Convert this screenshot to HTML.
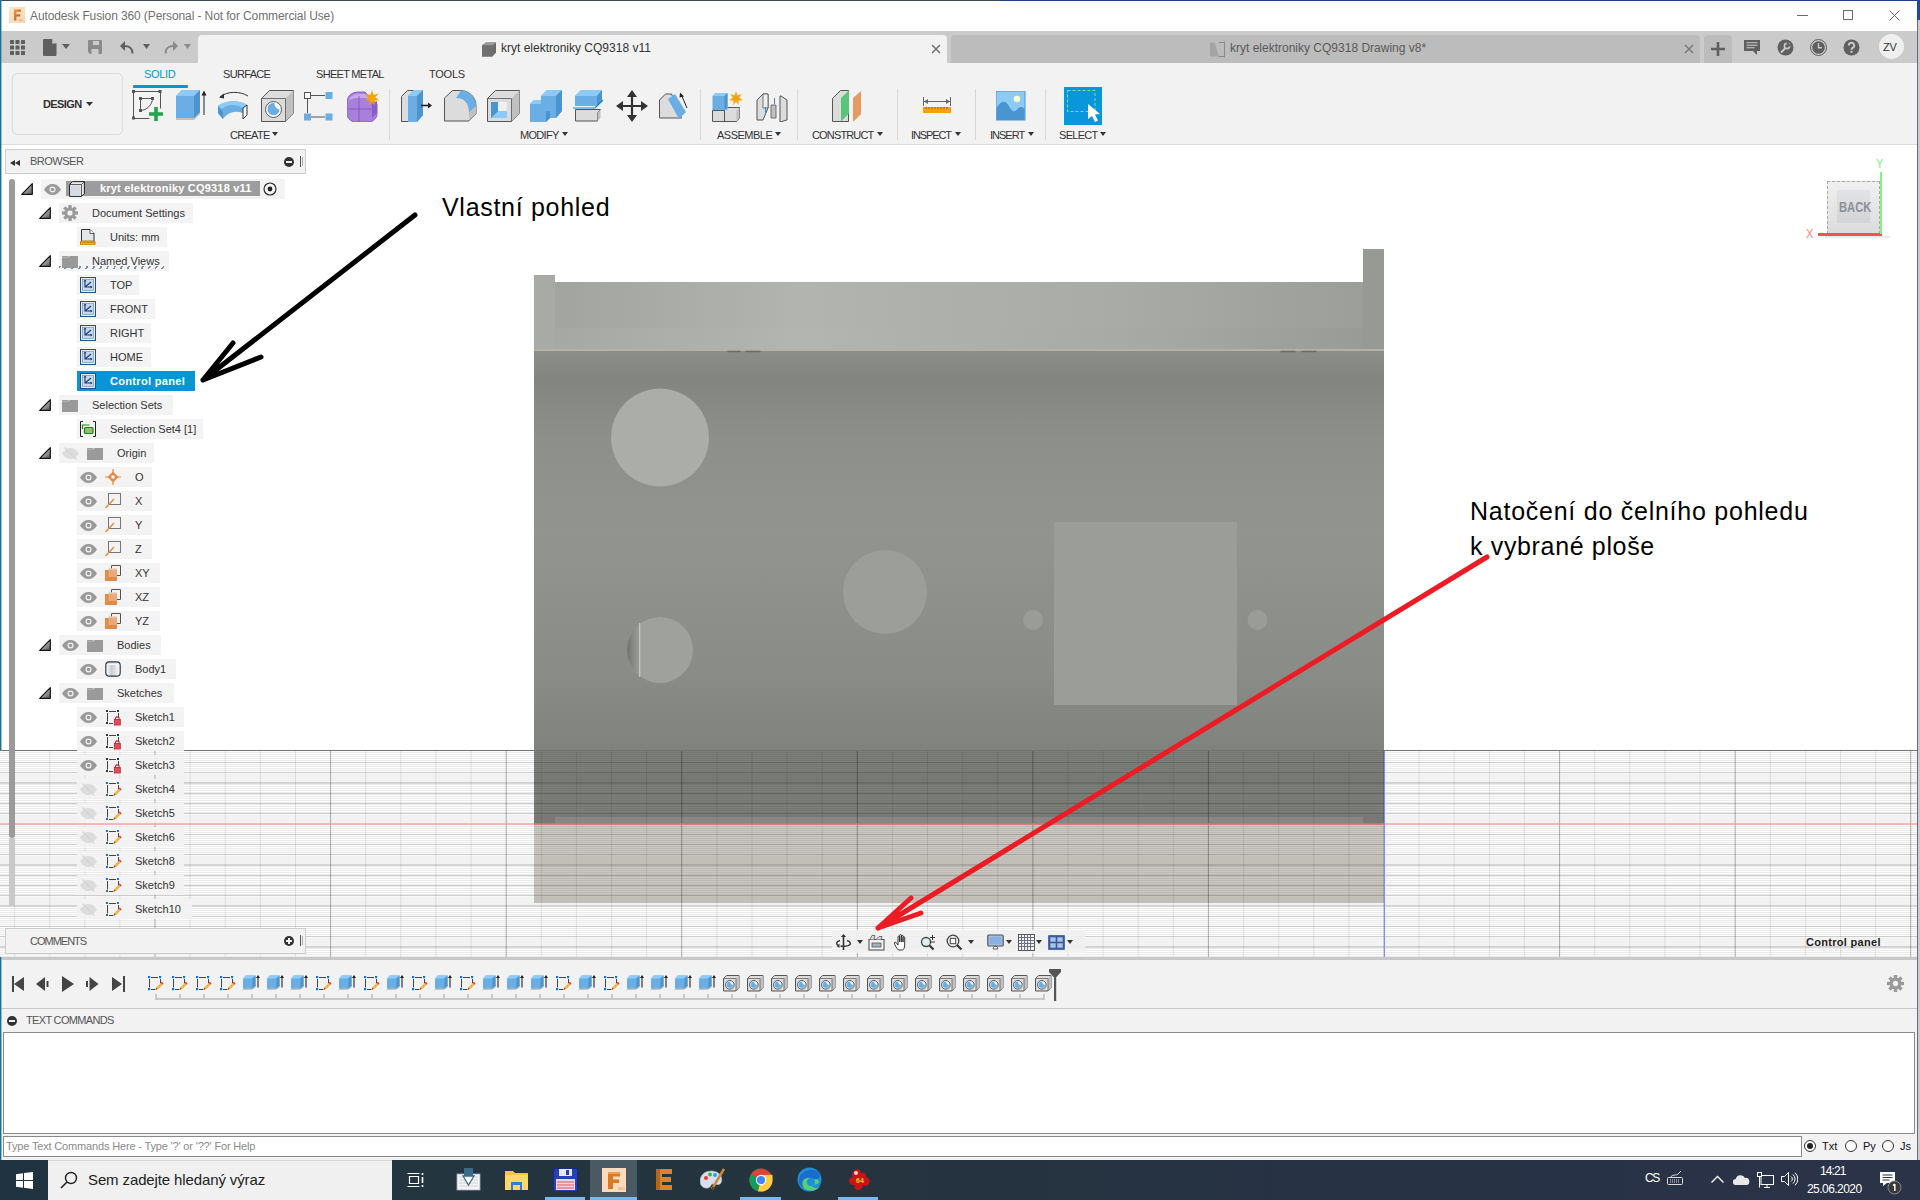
<!DOCTYPE html>
<html><head><meta charset="utf-8">
<style>
*{margin:0;padding:0;box-sizing:border-box}
html,body{width:1920px;height:1200px;overflow:hidden;background:#fff;font-family:"Liberation Sans",sans-serif}
.a{position:absolute}
.t{position:absolute;white-space:nowrap;line-height:1}
</style></head><body>
<!-- title bar -->
<div class="a" style="left:0;top:0;width:1920px;height:31px;background:#fff"></div>
<div class="a" style="left:0;top:0;width:1920px;height:1px;background:#3c4a55"></div>
<!-- tab strip -->
<div class="a" style="left:0;top:31px;width:1920px;height:32px;background:#cbcbcb"></div>
<!-- toolbar -->
<div class="a" style="left:0;top:63px;width:1920px;height:82px;background:#f2f2f2;border-bottom:1px solid #dcdcdc"></div>
<!-- viewport -->
<div class="a" id="vp" style="left:0;top:145px;width:1920px;height:812px;background:#fff"></div>
<!-- timeline -->
<div class="a" style="left:0;top:957px;width:1920px;height:3px;background:#c8c8c8"></div>
<div class="a" style="left:0;top:960px;width:1920px;height:48px;background:#f2f2f2"></div>
<!-- text commands -->
<div class="a" style="left:0;top:1008px;width:1920px;height:152px;background:#f2f2f2;border-top:1px solid #c8c8c8"></div>
<!-- taskbar -->
<div class="a" style="left:0;top:1160px;width:1920px;height:40px;background:linear-gradient(90deg,#22363f,#25343f 45%,#283246 80%,#2b3348)"></div>
<!-- window borders -->
<div class="a" style="left:0;top:0;width:1px;height:1160px;background:#1f6e99"></div><div class="a" style="left:1px;top:0;width:1px;height:1160px;background:#5b93b5;opacity:.6"></div>


<!-- VIEWPORT -->
<svg class="a" style="left:0;top:0" width="1920" height="960" viewBox="0 0 1920 960">
<defs>
<linearGradient id="body" x1="0" y1="0" x2="0" y2="1">
<stop offset="0" stop-color="#8b8d88"/><stop offset=".07" stop-color="#838580"/><stop offset=".22" stop-color="#8d8f8a"/><stop offset=".45" stop-color="#92948f"/><stop offset=".8" stop-color="#8a8c87"/><stop offset="1" stop-color="#80827d"/>
</linearGradient>
<linearGradient id="rim" x1="0" y1="0" x2="1" y2="0">
<stop offset="0" stop-color="#a6a8a3"/><stop offset=".3" stop-color="#b3b5b0"/><stop offset=".7" stop-color="#a8aaa5"/><stop offset="1" stop-color="#999b96"/>
</linearGradient>
<linearGradient id="recess" x1="0" y1="0" x2="1" y2="0">
<stop offset="0" stop-color="#a2a4a0"/><stop offset=".3" stop-color="#b2b4af"/><stop offset=".7" stop-color="#a9aba6"/><stop offset="1" stop-color="#9c9e99"/>
</linearGradient>
</defs>
<rect x="0" y="750" width="1917" height="207" fill="#fdfdfd"/>
<!-- model -->
<rect x="534" y="275" width="21" height="76" fill="#a8aaa5"/>
<rect x="1363" y="249" width="21" height="102" fill="#979994"/>
<rect x="555" y="282" width="808" height="69" fill="url(#rim)"/>
<rect x="555" y="282" width="808" height="46" fill="url(#recess)"/>
<rect x="534" y="349" width="850" height="2" fill="#b4b1a6"/>
<rect x="534" y="351" width="850" height="399" fill="url(#body)"/>
<path d="M660 388.5a49 49 0 1 0 .01 0z" fill="#abada8"/>
<circle cx="885" cy="592" r="42" fill="#9c9e99"/>
<circle cx="660" cy="650" r="33" fill="#9fa19c"/>
<linearGradient id="cres" x1="0" y1="0" x2="1" y2="0"><stop offset="0" stop-color="#6f716c"/><stop offset=".6" stop-color="#8e908b"/><stop offset="1" stop-color="#9a9c97"/></linearGradient>
<path d="M640 623.8A33 33 0 0 0 640 676.2Z" fill="url(#cres)"/><rect x="639" y="623" width="1.3" height="54" fill="#c8c6bc"/>
<path d="M728 351.5h12M746 351.5h14M1281 351.5h14M1302 351.5h14" stroke="#6a6b66" stroke-width="1.3" stroke-linecap="round"/>
<circle cx="1033" cy="620" r="10" fill="#9a9c97"/>
<circle cx="1257.5" cy="620" r="10" fill="#9a9c97"/>
<rect x="1054" y="522" width="183" height="183" fill="#9b9d98"/>
<rect x="534" y="751" width="850" height="73" fill="#7d7f7a"/>
<rect x="555" y="817" width="808" height="7" fill="#8d8f8a"/>
<rect x="534" y="824" width="850" height="79" fill="#cbc8c1"/>
<!-- grid lines -->
<path d="M0 752.5h1917M0 754.5h1917M0 756.5h1917M0 758.5h1917M0 760.5h1917M0 764.5h1917M0 766.5h1917M0 768.5h1917M0 770.5h1917M0 784.5h1917M0 786.5h1917M0 788.5h1917M0 790.5h1917M0 792.5h1917M0 794.5h1917M0 796.5h1917M0 798.5h1917M0 800.5h1917M0 802.5h1917M0 804.5h1917M0 806.5h1917M0 808.5h1917M0 810.5h1917M0 812.5h1917M0 824.5h1917M0 826.5h1917M0 828.5h1917M0 830.5h1917M0 832.5h1917M0 836.5h1917M0 838.5h1917M0 840.5h1917M0 842.5h1917M0 846.5h1917M0 848.5h1917M0 850.5h1917M0 852.5h1917M0 866.5h1917M0 868.5h1917M0 870.5h1917M0 872.5h1917M0 874.5h1917M0 876.5h1917M0 878.5h1917M0 880.5h1917M0 882.5h1917M0 884.5h1917M0 886.5h1917M0 888.5h1917M0 890.5h1917M0 892.5h1917M0 894.5h1917M0 908.5h1917M0 910.5h1917M0 912.5h1917M0 914.5h1917M0 918.5h1917M0 920.5h1917M0 922.5h1917M0 924.5h1917M0 928.5h1917M0 930.5h1917M0 932.5h1917M0 934.5h1917M0 948.5h1917M0 950.5h1917M0 952.5h1917M0 954.5h1917M0 956.5h1917" stroke="#000" stroke-opacity=".07" stroke-width="1"/>
<path d="M0 762.5h1917M0 772.5h1917M0 793.5h1917M0 803.5h1917M0 813.5h1917M0 834.5h1917M0 844.5h1917M0 854.5h1917M0 875.5h1917M0 885.5h1917M0 895.5h1917M0 916.5h1917M0 926.5h1917M0 936.5h1917" stroke="#000" stroke-opacity=".19" stroke-width="1"/>
<path d="M0 778.0h1917M0 819.0h1917M0 860.0h1917M0 901.0h1917M0 942.0h1917" stroke="#000" stroke-opacity=".045" stroke-width="9"/>
<path d="M0 783h1917M0 865h1917M0 906h1917M0 947h1917" stroke="#000" stroke-opacity=".15" stroke-width="2"/>
<path d="M14.6 751v206M49.7 751v206M84.8 751v206M119.9 751v206M190.1 751v206M225.3 751v206M260.4 751v206M295.5 751v206M365.7 751v206M400.8 751v206M435.9 751v206M471.1 751v206M541.3 751v206M576.4 751v206M611.5 751v206M646.6 751v206M716.9 751v206M752.0 751v206M787.1 751v206M822.2 751v206M892.4 751v206M927.5 751v206M962.7 751v206M997.8 751v206M1068.0 751v206M1103.1 751v206M1138.2 751v206M1173.3 751v206M1243.6 751v206M1278.7 751v206M1313.8 751v206M1348.9 751v206M1419.1 751v206M1454.2 751v206M1489.4 751v206M1524.5 751v206M1594.7 751v206M1629.8 751v206M1664.9 751v206M1700.0 751v206M1770.3 751v206M1805.4 751v206M1840.5 751v206M1875.6 751v206" stroke="#000" stroke-opacity=".09" stroke-width="1"/>
<path d="M155.0 751v206M330.6 751v206M506.2 751v206M681.7 751v206M857.3 751v206M1032.9 751v206M1208.4 751v206M1384.0 751v206M1559.6 751v206M1735.2 751v206M1910.7 751v206" stroke="#000" stroke-opacity=".3" stroke-width="1"/>
<path d="M0 750.5h1917" stroke="#000" stroke-opacity=".55" stroke-width="1"/>
<path d="M0 824h1917" stroke="#ff8c8c" stroke-opacity=".8" stroke-width="1.6"/>
<path d="M534 824h850" stroke="#d05a5a" stroke-width="1.2"/>
<path d="M1384.5 751v206" stroke="#8a8af5" stroke-width="1"/>
</svg>

<!-- BROWSER -->
<div class="a" style="left:5px;top:149px;width:301px;height:25px;background:#f2f2f2;border:1px solid #cdcdcd"></div>
<svg class="a" style="left:10px;top:160px" width="10" height="6" viewBox="0 0 10 6"><path d="M0 3l5-3v6zM5 3l5-3v6z" fill="#333"/></svg>
<div class="t" id="browser" style="left:30px;top:156px;font-size:11px;color:#555;letter-spacing:-0.5px">BROWSER</div>
<div class="a" style="left:284px;top:157px;width:10px;height:10px;border-radius:50%;background:#333"></div><div class="a" style="left:286px;top:161px;width:6px;height:2px;background:#f2f2f2"></div>
<div class="a" style="left:300px;top:156px;width:1px;height:11px;background:#555"></div><div class="a" style="left:302px;top:157px;width:1px;height:9px;background:#aaa"></div>
<div class="a" style="left:9px;top:179px;width:6px;height:659px;background:#9b9b9b;border-radius:3px 3px 3px 3px"></div>
<div class="a" style="left:9px;top:838px;width:6px;height:68px;background:#c9c9c9"></div>
<div class="a" style="left:41px;top:179px;width:244px;height:20px;background:rgba(242,242,242,.95)"></div>
<svg class="a" style="left:21px;top:183px" width="12" height="12" viewBox="0 0 12 12"><defs><linearGradient id="tgr" x1="0" y1="0" x2="1" y2="1"><stop offset="0" stop-color="#eee"/><stop offset="1" stop-color="#555"/></linearGradient></defs><path d="M.7 11.3L11.3.7v10.6z" fill="url(#tgr)" stroke="#111" stroke-width="1.2" stroke-linejoin="round"/></svg>
<svg class="a" style="left:44px;top:184px" width="17" height="11" viewBox="0 0 17 11"><path d="M0 5.5C3 1 6 0 8.5 0S14 1 17 5.5C14 10 11 11 8.5 11S3 10 0 5.5z" fill="#9a9a9a"/><circle cx="8.5" cy="5.5" r="3" fill="#f2f2f2"/><circle cx="8.5" cy="5.5" r="1.8" fill="#9a9a9a"/></svg>
<div class="a" style="left:66px;top:181px;width:194px;height:15px;background:#9c9c9c"></div>
<svg class="a" style="left:69px;top:181px" width="16" height="16" viewBox="0 0 16 16"><path d="M.6 3.5L3.5.6h11.9v11.9l-2.9 2.9H.6z" fill="#e6e8ee" stroke="#222" stroke-width="1"/><path d="M.6 3.5h11.9v11.9M12.5 3.5l2.9-2.9" fill="none" stroke="#222" stroke-width=".7"/><rect x="1.5" y="4.5" width="10" height="10" fill="#d6dae2"/></svg>
<div class="t" id="rootlbl" style="left:100px;top:183px;font-size:11px;font-weight:bold;color:#fff;letter-spacing:0.2px">kryt elektroniky CQ9318 v11</div>
<svg class="a" style="left:263px;top:182px" width="14" height="14" viewBox="0 0 14 14"><circle cx="7" cy="7" r="6" fill="none" stroke="#222" stroke-width="1.1"/><circle cx="7" cy="7" r="2.4" fill="#222"/></svg>
<div class="a" style="left:59px;top:203px;width:134px;height:20px;background:rgba(242,242,242,.95)"></div>
<svg class="a" style="left:39px;top:207px" width="12" height="12" viewBox="0 0 12 12"><defs><linearGradient id="tg1" x1="0" y1="0" x2="1" y2="1"><stop offset="0" stop-color="#eee"/><stop offset="1" stop-color="#555"/></linearGradient></defs><path d="M.7 11.3L11.3.7v10.6z" fill="url(#tg1)" stroke="#111" stroke-width="1.2" stroke-linejoin="round"/></svg>
<svg class="a" style="left:62px;top:205px" width="16" height="16" viewBox="0 0 16 16"><g fill="#9a9a9a"><circle cx="8" cy="8" r="5.6"/><rect x="6.3" y="0" width="3.4" height="16"/><rect x="0" y="6.3" width="16" height="3.4"/><rect x="6.3" y="0" width="3.4" height="16" transform="rotate(45 8 8)"/><rect x="6.3" y="0" width="3.4" height="16" transform="rotate(-45 8 8)"/></g><circle cx="8" cy="8" r="2.6" fill="#f2f2f2"/></svg>
<div class="t" id="row1" style="left:92px;top:208px;font-size:11px;font-weight:normal;color:#333">Document Settings</div>
<div class="a" style="left:77px;top:227px;width:90px;height:20px;background:rgba(242,242,242,.95)"></div>
<svg class="a" style="left:80px;top:229px" width="16" height="16" viewBox="0 0 16 16"><path d="M1.5 .5h8.5l4 4v10.5h-12.5z" fill="#e4e6ea" stroke="#333" stroke-width="1"/><path d="M10 .5v4h4" fill="#fff" stroke="#333" stroke-width=".8"/><rect x=".5" y="12" width="14.5" height="4" rx="1" fill="#f5b400" stroke="#c07a00" stroke-width="1"/><path d="M3 13v1M5 13v1M7 13v1M9 13v1M11 13v1M13 13v1" stroke="#8a5a00" stroke-width=".8"/></svg>
<div class="t" id="row2" style="left:110px;top:232px;font-size:11px;font-weight:normal;color:#333">Units: mm</div>
<div class="a" style="left:59px;top:251px;width:110px;height:20px;background:rgba(242,242,242,.95)"></div>
<svg class="a" style="left:39px;top:255px" width="12" height="12" viewBox="0 0 12 12"><defs><linearGradient id="tg3" x1="0" y1="0" x2="1" y2="1"><stop offset="0" stop-color="#eee"/><stop offset="1" stop-color="#555"/></linearGradient></defs><path d="M.7 11.3L11.3.7v10.6z" fill="url(#tg3)" stroke="#111" stroke-width="1.2" stroke-linejoin="round"/></svg>
<svg class="a" style="left:62px;top:255px" width="16" height="13" viewBox="0 0 16 13"><path d="M0 1h6l1 1h-7z" fill="#a0a0a0"/><path d="M0 2.3h6.5l1.3-1.3H16v12H0z" fill="#9a9a9a"/></svg>
<div class="a" style="left:59px;top:266px;width:106px;height:3px;background:repeating-linear-gradient(120deg,#7a8aa8 0 1.6px,transparent 1.6px 6px)"></div>
<div class="t" id="row3" style="left:92px;top:256px;font-size:11px;font-weight:normal;color:#333">Named Views</div>
<div class="a" style="left:77px;top:275px;width:62px;height:20px;background:rgba(242,242,242,.95)"></div>
<svg class="a" style="left:80px;top:277px" width="16" height="16" viewBox="0 0 16 16"><rect x=".5" y=".5" width="15" height="15" fill="#fff" stroke="#1f4e8c" stroke-width="1.2"/><rect x="2.5" y="2.5" width="11" height="11" fill="#c5d8ec" stroke="#6f8fb8" stroke-width=".7"/><path d="M5 3.5v6.5h6.5M5 10l6-5" stroke="#1a3d70" stroke-width="1.1" fill="none"/><path d="M5 2.5l-1.5 2h3zM12.5 10l-2-1.5v3z" fill="#1a3d70"/></svg>
<div class="t" id="row4" style="left:110px;top:280px;font-size:11px;font-weight:normal;color:#333">TOP</div>
<div class="a" style="left:77px;top:299px;width:78px;height:20px;background:rgba(242,242,242,.95)"></div>
<svg class="a" style="left:80px;top:301px" width="16" height="16" viewBox="0 0 16 16"><rect x=".5" y=".5" width="15" height="15" fill="#fff" stroke="#1f4e8c" stroke-width="1.2"/><rect x="2.5" y="2.5" width="11" height="11" fill="#c5d8ec" stroke="#6f8fb8" stroke-width=".7"/><path d="M5 3.5v6.5h6.5M5 10l6-5" stroke="#1a3d70" stroke-width="1.1" fill="none"/><path d="M5 2.5l-1.5 2h3zM12.5 10l-2-1.5v3z" fill="#1a3d70"/></svg>
<div class="t" id="row5" style="left:110px;top:304px;font-size:11px;font-weight:normal;color:#333">FRONT</div>
<div class="a" style="left:77px;top:323px;width:74px;height:20px;background:rgba(242,242,242,.95)"></div>
<svg class="a" style="left:80px;top:325px" width="16" height="16" viewBox="0 0 16 16"><rect x=".5" y=".5" width="15" height="15" fill="#fff" stroke="#1f4e8c" stroke-width="1.2"/><rect x="2.5" y="2.5" width="11" height="11" fill="#c5d8ec" stroke="#6f8fb8" stroke-width=".7"/><path d="M5 3.5v6.5h6.5M5 10l6-5" stroke="#1a3d70" stroke-width="1.1" fill="none"/><path d="M5 2.5l-1.5 2h3zM12.5 10l-2-1.5v3z" fill="#1a3d70"/></svg>
<div class="t" id="row6" style="left:110px;top:328px;font-size:11px;font-weight:normal;color:#333">RIGHT</div>
<div class="a" style="left:77px;top:347px;width:74px;height:20px;background:rgba(242,242,242,.95)"></div>
<svg class="a" style="left:80px;top:349px" width="16" height="16" viewBox="0 0 16 16"><rect x=".5" y=".5" width="15" height="15" fill="#fff" stroke="#1f4e8c" stroke-width="1.2"/><rect x="2.5" y="2.5" width="11" height="11" fill="#c5d8ec" stroke="#6f8fb8" stroke-width=".7"/><path d="M5 3.5v6.5h6.5M5 10l6-5" stroke="#1a3d70" stroke-width="1.1" fill="none"/><path d="M5 2.5l-1.5 2h3zM12.5 10l-2-1.5v3z" fill="#1a3d70"/></svg>
<div class="t" id="row7" style="left:110px;top:352px;font-size:11px;font-weight:normal;color:#333">HOME</div>
<div class="a" style="left:77px;top:371px;width:118px;height:20px;background:#0696d7"></div>
<svg class="a" style="left:80px;top:373px" width="16" height="16" viewBox="0 0 16 16"><rect x=".5" y=".5" width="15" height="15" fill="#fff" stroke="#1f4e8c" stroke-width="1.2"/><rect x="2.5" y="2.5" width="11" height="11" fill="#c5d8ec" stroke="#6f8fb8" stroke-width=".7"/><path d="M5 3.5v6.5h6.5M5 10l6-5" stroke="#1a3d70" stroke-width="1.1" fill="none"/><path d="M5 2.5l-1.5 2h3zM12.5 10l-2-1.5v3z" fill="#1a3d70"/></svg>
<div class="t" id="row8" style="left:110px;top:376px;font-size:11px;font-weight:bold;color:#fff;letter-spacing:0.33px">Control panel</div>
<div class="a" style="left:59px;top:395px;width:114px;height:20px;background:rgba(242,242,242,.95)"></div>
<svg class="a" style="left:39px;top:399px" width="12" height="12" viewBox="0 0 12 12"><defs><linearGradient id="tg9" x1="0" y1="0" x2="1" y2="1"><stop offset="0" stop-color="#eee"/><stop offset="1" stop-color="#555"/></linearGradient></defs><path d="M.7 11.3L11.3.7v10.6z" fill="url(#tg9)" stroke="#111" stroke-width="1.2" stroke-linejoin="round"/></svg>
<svg class="a" style="left:62px;top:399px" width="16" height="13" viewBox="0 0 16 13"><path d="M0 1h6l1 1h-7z" fill="#a0a0a0"/><path d="M0 2.3h6.5l1.3-1.3H16v12H0z" fill="#9a9a9a"/></svg>
<div class="t" id="row9" style="left:92px;top:400px;font-size:11px;font-weight:normal;color:#333">Selection Sets</div>
<div class="a" style="left:77px;top:419px;width:126px;height:20px;background:rgba(242,242,242,.95)"></div>
<svg class="a" style="left:80px;top:421px" width="16" height="16" viewBox="0 0 16 16"><path d="M3 .5H.5v15H3M13 .5h2.5v15H13" fill="none" stroke="#222" stroke-width="1"/><path d="M2.5 8V4h7" fill="none" stroke="#1f8a1f" stroke-width="1.2"/><rect x="4.5" y="6.5" width="8.5" height="6" rx="1" fill="#8cc36c" stroke="#1f7a1f" stroke-width="1.2"/></svg>
<div class="t" id="row10" style="left:110px;top:424px;font-size:11px;font-weight:normal;color:#333">Selection Set4 [1]</div>
<div class="a" style="left:59px;top:443px;width:95px;height:20px;background:rgba(242,242,242,.95)"></div>
<svg class="a" style="left:39px;top:447px" width="12" height="12" viewBox="0 0 12 12"><defs><linearGradient id="tg11" x1="0" y1="0" x2="1" y2="1"><stop offset="0" stop-color="#eee"/><stop offset="1" stop-color="#555"/></linearGradient></defs><path d="M.7 11.3L11.3.7v10.6z" fill="url(#tg11)" stroke="#111" stroke-width="1.2" stroke-linejoin="round"/></svg>
<svg class="a" style="left:62px;top:447px" width="17" height="13" viewBox="0 0 17 13"><path d="M0 6.5C3 2 6 1 8.5 1S14 2 17 6.5C14 11 11 12 8.5 12S3 11 0 6.5z" fill="#dcdcdc"/><path d="M2.5 .5l12 12" stroke="#d4d4d4" stroke-width="1.3"/></svg>
<svg class="a" style="left:87px;top:447px" width="16" height="13" viewBox="0 0 16 13"><path d="M0 1h6l1 1h-7z" fill="#a0a0a0"/><path d="M0 2.3h6.5l1.3-1.3H16v12H0z" fill="#9a9a9a"/></svg>
<div class="t" id="row11" style="left:117px;top:448px;font-size:11px;font-weight:normal;color:#333">Origin</div>
<div class="a" style="left:77px;top:467px;width:75px;height:20px;background:rgba(242,242,242,.95)"></div>
<svg class="a" style="left:80px;top:472px" width="17" height="11" viewBox="0 0 17 11"><path d="M0 5.5C3 1 6 0 8.5 0S14 1 17 5.5C14 10 11 11 8.5 11S3 10 0 5.5z" fill="#9a9a9a"/><circle cx="8.5" cy="5.5" r="3" fill="#f2f2f2"/><circle cx="8.5" cy="5.5" r="1.8" fill="#9a9a9a"/></svg>
<svg class="a" style="left:105px;top:469px" width="16" height="16" viewBox="0 0 16 16"><path d="M8 0v16M0 8h16" stroke="#e38a45" stroke-width="1.2"/><path d="M8 2.5L13.5 8 8 13.5 2.5 8z" fill="#e38a45"/><rect x="6.5" y="6.5" width="3" height="3" fill="#fff"/></svg>
<div class="t" id="row12" style="left:135px;top:472px;font-size:11px;font-weight:normal;color:#333">O</div>
<div class="a" style="left:77px;top:491px;width:75px;height:20px;background:rgba(242,242,242,.95)"></div>
<svg class="a" style="left:80px;top:496px" width="17" height="11" viewBox="0 0 17 11"><path d="M0 5.5C3 1 6 0 8.5 0S14 1 17 5.5C14 10 11 11 8.5 11S3 10 0 5.5z" fill="#9a9a9a"/><circle cx="8.5" cy="5.5" r="3" fill="#f2f2f2"/><circle cx="8.5" cy="5.5" r="1.8" fill="#9a9a9a"/></svg>
<svg class="a" style="left:105px;top:493px" width="16" height="16" viewBox="0 0 16 16"><rect x="3.5" y=".5" width="12" height="11" fill="none" stroke="#777" stroke-width="1"/><path d="M.5 15L9 6" stroke="#e38a45" stroke-width="1.4"/></svg>
<div class="t" id="row13" style="left:135px;top:496px;font-size:11px;font-weight:normal;color:#333">X</div>
<div class="a" style="left:77px;top:515px;width:75px;height:20px;background:rgba(242,242,242,.95)"></div>
<svg class="a" style="left:80px;top:520px" width="17" height="11" viewBox="0 0 17 11"><path d="M0 5.5C3 1 6 0 8.5 0S14 1 17 5.5C14 10 11 11 8.5 11S3 10 0 5.5z" fill="#9a9a9a"/><circle cx="8.5" cy="5.5" r="3" fill="#f2f2f2"/><circle cx="8.5" cy="5.5" r="1.8" fill="#9a9a9a"/></svg>
<svg class="a" style="left:105px;top:517px" width="16" height="16" viewBox="0 0 16 16"><rect x="3.5" y=".5" width="12" height="11" fill="none" stroke="#777" stroke-width="1"/><path d="M.5 15L9 6" stroke="#e38a45" stroke-width="1.4"/></svg>
<div class="t" id="row14" style="left:135px;top:520px;font-size:11px;font-weight:normal;color:#333">Y</div>
<div class="a" style="left:77px;top:539px;width:75px;height:20px;background:rgba(242,242,242,.95)"></div>
<svg class="a" style="left:80px;top:544px" width="17" height="11" viewBox="0 0 17 11"><path d="M0 5.5C3 1 6 0 8.5 0S14 1 17 5.5C14 10 11 11 8.5 11S3 10 0 5.5z" fill="#9a9a9a"/><circle cx="8.5" cy="5.5" r="3" fill="#f2f2f2"/><circle cx="8.5" cy="5.5" r="1.8" fill="#9a9a9a"/></svg>
<svg class="a" style="left:105px;top:541px" width="16" height="16" viewBox="0 0 16 16"><rect x="3.5" y=".5" width="12" height="11" fill="none" stroke="#777" stroke-width="1"/><path d="M.5 15L9 6" stroke="#e38a45" stroke-width="1.4"/></svg>
<div class="t" id="row15" style="left:135px;top:544px;font-size:11px;font-weight:normal;color:#333">Z</div>
<div class="a" style="left:77px;top:563px;width:83px;height:20px;background:rgba(242,242,242,.95)"></div>
<svg class="a" style="left:80px;top:568px" width="17" height="11" viewBox="0 0 17 11"><path d="M0 5.5C3 1 6 0 8.5 0S14 1 17 5.5C14 10 11 11 8.5 11S3 10 0 5.5z" fill="#9a9a9a"/><circle cx="8.5" cy="5.5" r="3" fill="#f2f2f2"/><circle cx="8.5" cy="5.5" r="1.8" fill="#9a9a9a"/></svg>
<svg class="a" style="left:105px;top:565px" width="16" height="16" viewBox="0 0 16 16"><path d="M6.5 3.5v-3h9v10H12" fill="none" stroke="#555" stroke-width="1"/><rect x="0" y="5" width="12" height="11" fill="#e38a45"/><rect x="3.5" y="3.5" width="8.5" height="8.5" fill="#e8b08a" opacity=".8"/></svg>
<div class="t" id="row16" style="left:135px;top:568px;font-size:11px;font-weight:normal;color:#333">XY</div>
<div class="a" style="left:77px;top:587px;width:83px;height:20px;background:rgba(242,242,242,.95)"></div>
<svg class="a" style="left:80px;top:592px" width="17" height="11" viewBox="0 0 17 11"><path d="M0 5.5C3 1 6 0 8.5 0S14 1 17 5.5C14 10 11 11 8.5 11S3 10 0 5.5z" fill="#9a9a9a"/><circle cx="8.5" cy="5.5" r="3" fill="#f2f2f2"/><circle cx="8.5" cy="5.5" r="1.8" fill="#9a9a9a"/></svg>
<svg class="a" style="left:105px;top:589px" width="16" height="16" viewBox="0 0 16 16"><path d="M6.5 3.5v-3h9v10H12" fill="none" stroke="#555" stroke-width="1"/><rect x="0" y="5" width="12" height="11" fill="#e38a45"/><rect x="3.5" y="3.5" width="8.5" height="8.5" fill="#e8b08a" opacity=".8"/></svg>
<div class="t" id="row17" style="left:135px;top:592px;font-size:11px;font-weight:normal;color:#333">XZ</div>
<div class="a" style="left:77px;top:611px;width:83px;height:20px;background:rgba(242,242,242,.95)"></div>
<svg class="a" style="left:80px;top:616px" width="17" height="11" viewBox="0 0 17 11"><path d="M0 5.5C3 1 6 0 8.5 0S14 1 17 5.5C14 10 11 11 8.5 11S3 10 0 5.5z" fill="#9a9a9a"/><circle cx="8.5" cy="5.5" r="3" fill="#f2f2f2"/><circle cx="8.5" cy="5.5" r="1.8" fill="#9a9a9a"/></svg>
<svg class="a" style="left:105px;top:613px" width="16" height="16" viewBox="0 0 16 16"><path d="M6.5 3.5v-3h9v10H12" fill="none" stroke="#555" stroke-width="1"/><rect x="0" y="5" width="12" height="11" fill="#e38a45"/><rect x="3.5" y="3.5" width="8.5" height="8.5" fill="#e8b08a" opacity=".8"/></svg>
<div class="t" id="row18" style="left:135px;top:616px;font-size:11px;font-weight:normal;color:#333">YZ</div>
<div class="a" style="left:59px;top:635px;width:102px;height:20px;background:rgba(242,242,242,.95)"></div>
<svg class="a" style="left:39px;top:639px" width="12" height="12" viewBox="0 0 12 12"><defs><linearGradient id="tg19" x1="0" y1="0" x2="1" y2="1"><stop offset="0" stop-color="#eee"/><stop offset="1" stop-color="#555"/></linearGradient></defs><path d="M.7 11.3L11.3.7v10.6z" fill="url(#tg19)" stroke="#111" stroke-width="1.2" stroke-linejoin="round"/></svg>
<svg class="a" style="left:62px;top:640px" width="17" height="11" viewBox="0 0 17 11"><path d="M0 5.5C3 1 6 0 8.5 0S14 1 17 5.5C14 10 11 11 8.5 11S3 10 0 5.5z" fill="#9a9a9a"/><circle cx="8.5" cy="5.5" r="3" fill="#f2f2f2"/><circle cx="8.5" cy="5.5" r="1.8" fill="#9a9a9a"/></svg>
<svg class="a" style="left:87px;top:639px" width="16" height="13" viewBox="0 0 16 13"><path d="M0 1h6l1 1h-7z" fill="#a0a0a0"/><path d="M0 2.3h6.5l1.3-1.3H16v12H0z" fill="#9a9a9a"/></svg>
<div class="t" id="row19" style="left:117px;top:640px;font-size:11px;font-weight:normal;color:#333">Bodies</div>
<div class="a" style="left:77px;top:659px;width:99px;height:20px;background:rgba(242,242,242,.95)"></div>
<svg class="a" style="left:80px;top:664px" width="17" height="11" viewBox="0 0 17 11"><path d="M0 5.5C3 1 6 0 8.5 0S14 1 17 5.5C14 10 11 11 8.5 11S3 10 0 5.5z" fill="#9a9a9a"/><circle cx="8.5" cy="5.5" r="3" fill="#f2f2f2"/><circle cx="8.5" cy="5.5" r="1.8" fill="#9a9a9a"/></svg>
<svg class="a" style="left:105px;top:661px" width="16" height="16" viewBox="0 0 16 16"><defs><linearGradient id="bdg" x1="0" y1="0" x2="1" y2="0"><stop offset="0" stop-color="#fff"/><stop offset=".4" stop-color="#c8ccd4"/><stop offset="1" stop-color="#fff"/></linearGradient></defs><rect x=".8" y=".8" width="14.4" height="14.4" rx="3.5" fill="url(#bdg)" stroke="#333b45" stroke-width="1.2"/><path d="M1.5 4c3-2 10-2 13 0" fill="#f4f4f4"/></svg>
<div class="t" id="row20" style="left:135px;top:664px;font-size:11px;font-weight:normal;color:#333">Body1</div>
<div class="a" style="left:59px;top:683px;width:115px;height:20px;background:rgba(242,242,242,.95)"></div>
<svg class="a" style="left:39px;top:687px" width="12" height="12" viewBox="0 0 12 12"><defs><linearGradient id="tg21" x1="0" y1="0" x2="1" y2="1"><stop offset="0" stop-color="#eee"/><stop offset="1" stop-color="#555"/></linearGradient></defs><path d="M.7 11.3L11.3.7v10.6z" fill="url(#tg21)" stroke="#111" stroke-width="1.2" stroke-linejoin="round"/></svg>
<svg class="a" style="left:62px;top:688px" width="17" height="11" viewBox="0 0 17 11"><path d="M0 5.5C3 1 6 0 8.5 0S14 1 17 5.5C14 10 11 11 8.5 11S3 10 0 5.5z" fill="#9a9a9a"/><circle cx="8.5" cy="5.5" r="3" fill="#f2f2f2"/><circle cx="8.5" cy="5.5" r="1.8" fill="#9a9a9a"/></svg>
<svg class="a" style="left:87px;top:687px" width="16" height="13" viewBox="0 0 16 13"><path d="M0 1h6l1 1h-7z" fill="#a0a0a0"/><path d="M0 2.3h6.5l1.3-1.3H16v12H0z" fill="#9a9a9a"/></svg>
<div class="t" id="row21" style="left:117px;top:688px;font-size:11px;font-weight:normal;color:#333">Sketches</div>
<div class="a" style="left:77px;top:707px;width:107px;height:20px;background:rgba(242,242,242,.95)"></div>
<svg class="a" style="left:80px;top:712px" width="17" height="11" viewBox="0 0 17 11"><path d="M0 5.5C3 1 6 0 8.5 0S14 1 17 5.5C14 10 11 11 8.5 11S3 10 0 5.5z" fill="#9a9a9a"/><circle cx="8.5" cy="5.5" r="3" fill="#f2f2f2"/><circle cx="8.5" cy="5.5" r="1.8" fill="#9a9a9a"/></svg>
<svg class="a" style="left:105px;top:709px" width="17" height="17" viewBox="0 0 17 17"><path d="M4 2.5h7M2.5 4v8.5M4 14.5h4M13.5 4v4.5" stroke="#444" stroke-width="1"/><rect x="1" y="1" width="2" height="2" fill="#333"/><rect x="12" y="1" width="2" height="2" fill="#333"/><rect x="1" y="13" width="2" height="2" fill="#333"/><rect x="9.3" y="10.5" width="6" height="5.5" fill="#e0505a" stroke="#c02030" stroke-width=".8"/><path d="M10.5 10.5V9a2 2 0 0 1 3.6 0v1.5" fill="none" stroke="#c02030" stroke-width="1.1"/></svg>
<div class="t" id="row22" style="left:135px;top:712px;font-size:11px;font-weight:normal;color:#333">Sketch1</div>
<div class="a" style="left:77px;top:731px;width:107px;height:20px;background:rgba(242,242,242,.95)"></div>
<svg class="a" style="left:80px;top:736px" width="17" height="11" viewBox="0 0 17 11"><path d="M0 5.5C3 1 6 0 8.5 0S14 1 17 5.5C14 10 11 11 8.5 11S3 10 0 5.5z" fill="#9a9a9a"/><circle cx="8.5" cy="5.5" r="3" fill="#f2f2f2"/><circle cx="8.5" cy="5.5" r="1.8" fill="#9a9a9a"/></svg>
<svg class="a" style="left:105px;top:733px" width="17" height="17" viewBox="0 0 17 17"><path d="M4 2.5h7M2.5 4v8.5M4 14.5h4M13.5 4v4.5" stroke="#444" stroke-width="1"/><rect x="1" y="1" width="2" height="2" fill="#333"/><rect x="12" y="1" width="2" height="2" fill="#333"/><rect x="1" y="13" width="2" height="2" fill="#333"/><rect x="9.3" y="10.5" width="6" height="5.5" fill="#e0505a" stroke="#c02030" stroke-width=".8"/><path d="M10.5 10.5V9a2 2 0 0 1 3.6 0v1.5" fill="none" stroke="#c02030" stroke-width="1.1"/></svg>
<div class="t" id="row23" style="left:135px;top:736px;font-size:11px;font-weight:normal;color:#333">Sketch2</div>
<div class="a" style="left:77px;top:755px;width:107px;height:20px;background:rgba(242,242,242,.95)"></div>
<svg class="a" style="left:80px;top:760px" width="17" height="11" viewBox="0 0 17 11"><path d="M0 5.5C3 1 6 0 8.5 0S14 1 17 5.5C14 10 11 11 8.5 11S3 10 0 5.5z" fill="#9a9a9a"/><circle cx="8.5" cy="5.5" r="3" fill="#f2f2f2"/><circle cx="8.5" cy="5.5" r="1.8" fill="#9a9a9a"/></svg>
<svg class="a" style="left:105px;top:757px" width="17" height="17" viewBox="0 0 17 17"><path d="M4 2.5h7M2.5 4v8.5M4 14.5h4M13.5 4v4.5" stroke="#444" stroke-width="1"/><rect x="1" y="1" width="2" height="2" fill="#333"/><rect x="12" y="1" width="2" height="2" fill="#333"/><rect x="1" y="13" width="2" height="2" fill="#333"/><rect x="9.3" y="10.5" width="6" height="5.5" fill="#e0505a" stroke="#c02030" stroke-width=".8"/><path d="M10.5 10.5V9a2 2 0 0 1 3.6 0v1.5" fill="none" stroke="#c02030" stroke-width="1.1"/></svg>
<div class="t" id="row24" style="left:135px;top:760px;font-size:11px;font-weight:normal;color:#333">Sketch3</div>
<div class="a" style="left:77px;top:779px;width:107px;height:20px;background:rgba(242,242,242,.95)"></div>
<svg class="a" style="left:80px;top:783px" width="17" height="13" viewBox="0 0 17 13"><path d="M0 6.5C3 2 6 1 8.5 1S14 2 17 6.5C14 11 11 12 8.5 12S3 11 0 6.5z" fill="#dcdcdc"/><path d="M2.5 .5l12 12" stroke="#d4d4d4" stroke-width="1.3"/></svg>
<svg class="a" style="left:105px;top:781px" width="17" height="17" viewBox="0 0 17 17"><path d="M4 2.5h7M2.5 4v8.5M4 14.5h4M13.5 4v4.5" stroke="#444" stroke-width="1"/><rect x="1" y="1" width="2" height="2" fill="#0a78e0"/><rect x="12" y="1" width="2" height="2" fill="#0a78e0"/><rect x="1" y="13" width="2" height="2" fill="#0a78e0"/><path d="M8.3 14.8l1-2.6 4.5-4.5 1.8 1.8-4.5 4.5z" fill="#f5b43a"/><path d="M13.6 7.5l1.2-1 1.8 1.8-1 1.2z" fill="#ee3333"/><path d="M8.3 14.8l1-2.3 1.3 1.3z" fill="#555"/></svg>
<div class="t" id="row25" style="left:135px;top:784px;font-size:11px;font-weight:normal;color:#333">Sketch4</div>
<div class="a" style="left:77px;top:803px;width:107px;height:20px;background:rgba(242,242,242,.95)"></div>
<svg class="a" style="left:80px;top:807px" width="17" height="13" viewBox="0 0 17 13"><path d="M0 6.5C3 2 6 1 8.5 1S14 2 17 6.5C14 11 11 12 8.5 12S3 11 0 6.5z" fill="#dcdcdc"/><path d="M2.5 .5l12 12" stroke="#d4d4d4" stroke-width="1.3"/></svg>
<svg class="a" style="left:105px;top:805px" width="17" height="17" viewBox="0 0 17 17"><path d="M4 2.5h7M2.5 4v8.5M4 14.5h4M13.5 4v4.5" stroke="#444" stroke-width="1"/><rect x="1" y="1" width="2" height="2" fill="#0a78e0"/><rect x="12" y="1" width="2" height="2" fill="#0a78e0"/><rect x="1" y="13" width="2" height="2" fill="#0a78e0"/><path d="M8.3 14.8l1-2.6 4.5-4.5 1.8 1.8-4.5 4.5z" fill="#f5b43a"/><path d="M13.6 7.5l1.2-1 1.8 1.8-1 1.2z" fill="#ee3333"/><path d="M8.3 14.8l1-2.3 1.3 1.3z" fill="#555"/></svg>
<div class="t" id="row26" style="left:135px;top:808px;font-size:11px;font-weight:normal;color:#333">Sketch5</div>
<div class="a" style="left:77px;top:827px;width:107px;height:20px;background:rgba(242,242,242,.95)"></div>
<svg class="a" style="left:80px;top:831px" width="17" height="13" viewBox="0 0 17 13"><path d="M0 6.5C3 2 6 1 8.5 1S14 2 17 6.5C14 11 11 12 8.5 12S3 11 0 6.5z" fill="#dcdcdc"/><path d="M2.5 .5l12 12" stroke="#d4d4d4" stroke-width="1.3"/></svg>
<svg class="a" style="left:105px;top:829px" width="17" height="17" viewBox="0 0 17 17"><path d="M4 2.5h7M2.5 4v8.5M4 14.5h4M13.5 4v4.5" stroke="#444" stroke-width="1"/><rect x="1" y="1" width="2" height="2" fill="#0a78e0"/><rect x="12" y="1" width="2" height="2" fill="#0a78e0"/><rect x="1" y="13" width="2" height="2" fill="#0a78e0"/><path d="M8.3 14.8l1-2.6 4.5-4.5 1.8 1.8-4.5 4.5z" fill="#f5b43a"/><path d="M13.6 7.5l1.2-1 1.8 1.8-1 1.2z" fill="#ee3333"/><path d="M8.3 14.8l1-2.3 1.3 1.3z" fill="#555"/></svg>
<div class="t" id="row27" style="left:135px;top:832px;font-size:11px;font-weight:normal;color:#333">Sketch6</div>
<div class="a" style="left:77px;top:851px;width:107px;height:20px;background:rgba(242,242,242,.95)"></div>
<svg class="a" style="left:80px;top:855px" width="17" height="13" viewBox="0 0 17 13"><path d="M0 6.5C3 2 6 1 8.5 1S14 2 17 6.5C14 11 11 12 8.5 12S3 11 0 6.5z" fill="#dcdcdc"/><path d="M2.5 .5l12 12" stroke="#d4d4d4" stroke-width="1.3"/></svg>
<svg class="a" style="left:105px;top:853px" width="17" height="17" viewBox="0 0 17 17"><path d="M4 2.5h7M2.5 4v8.5M4 14.5h4M13.5 4v4.5" stroke="#444" stroke-width="1"/><rect x="1" y="1" width="2" height="2" fill="#0a78e0"/><rect x="12" y="1" width="2" height="2" fill="#0a78e0"/><rect x="1" y="13" width="2" height="2" fill="#0a78e0"/><path d="M8.3 14.8l1-2.6 4.5-4.5 1.8 1.8-4.5 4.5z" fill="#f5b43a"/><path d="M13.6 7.5l1.2-1 1.8 1.8-1 1.2z" fill="#ee3333"/><path d="M8.3 14.8l1-2.3 1.3 1.3z" fill="#555"/></svg>
<div class="t" id="row28" style="left:135px;top:856px;font-size:11px;font-weight:normal;color:#333">Sketch8</div>
<div class="a" style="left:77px;top:875px;width:107px;height:20px;background:rgba(242,242,242,.95)"></div>
<svg class="a" style="left:80px;top:879px" width="17" height="13" viewBox="0 0 17 13"><path d="M0 6.5C3 2 6 1 8.5 1S14 2 17 6.5C14 11 11 12 8.5 12S3 11 0 6.5z" fill="#dcdcdc"/><path d="M2.5 .5l12 12" stroke="#d4d4d4" stroke-width="1.3"/></svg>
<svg class="a" style="left:105px;top:877px" width="17" height="17" viewBox="0 0 17 17"><path d="M4 2.5h7M2.5 4v8.5M4 14.5h4M13.5 4v4.5" stroke="#444" stroke-width="1"/><rect x="1" y="1" width="2" height="2" fill="#0a78e0"/><rect x="12" y="1" width="2" height="2" fill="#0a78e0"/><rect x="1" y="13" width="2" height="2" fill="#0a78e0"/><path d="M8.3 14.8l1-2.6 4.5-4.5 1.8 1.8-4.5 4.5z" fill="#f5b43a"/><path d="M13.6 7.5l1.2-1 1.8 1.8-1 1.2z" fill="#ee3333"/><path d="M8.3 14.8l1-2.3 1.3 1.3z" fill="#555"/></svg>
<div class="t" id="row29" style="left:135px;top:880px;font-size:11px;font-weight:normal;color:#333">Sketch9</div>
<div class="a" style="left:77px;top:899px;width:115px;height:20px;background:rgba(242,242,242,.95)"></div>
<svg class="a" style="left:80px;top:903px" width="17" height="13" viewBox="0 0 17 13"><path d="M0 6.5C3 2 6 1 8.5 1S14 2 17 6.5C14 11 11 12 8.5 12S3 11 0 6.5z" fill="#dcdcdc"/><path d="M2.5 .5l12 12" stroke="#d4d4d4" stroke-width="1.3"/></svg>
<svg class="a" style="left:105px;top:901px" width="17" height="17" viewBox="0 0 17 17"><path d="M4 2.5h7M2.5 4v8.5M4 14.5h4M13.5 4v4.5" stroke="#444" stroke-width="1"/><rect x="1" y="1" width="2" height="2" fill="#0a78e0"/><rect x="12" y="1" width="2" height="2" fill="#0a78e0"/><rect x="1" y="13" width="2" height="2" fill="#0a78e0"/><path d="M8.3 14.8l1-2.6 4.5-4.5 1.8 1.8-4.5 4.5z" fill="#f5b43a"/><path d="M13.6 7.5l1.2-1 1.8 1.8-1 1.2z" fill="#ee3333"/><path d="M8.3 14.8l1-2.3 1.3 1.3z" fill="#555"/></svg>
<div class="t" id="row30" style="left:135px;top:904px;font-size:11px;font-weight:normal;color:#333">Sketch10</div>
<div class="a" style="left:5px;top:928px;width:301px;height:26px;background:#f2f2f2;border:1px solid #cdcdcd"></div>
<div class="t" id="comments" style="left:30px;top:936px;font-size:11px;color:#555;letter-spacing:-1px">COMMENTS</div>
<div class="a" style="left:284px;top:936px;width:10px;height:10px;border-radius:50%;background:#333"></div><div class="a" style="left:286px;top:940px;width:6px;height:2px;background:#f2f2f2"></div><div class="a" style="left:288px;top:938px;width:2px;height:6px;background:#f2f2f2"></div>
<div class="a" style="left:300px;top:935px;width:1px;height:11px;background:#555"></div><div class="a" style="left:302px;top:936px;width:1px;height:9px;background:#aaa"></div>
<!-- TITLE BAR CONTENT -->
<svg class="a" style="left:9px;top:7px" width="16" height="16" viewBox="0 0 16 16">
<defs><linearGradient id="fg" x1="0" y1="0" x2="1" y2="1"><stop offset="0" stop-color="#fde6cf"/><stop offset="1" stop-color="#f9d6b4"/></linearGradient>
<linearGradient id="fo" x1="0" y1="0" x2="1" y2="1"><stop offset="0" stop-color="#f09a3c"/><stop offset="1" stop-color="#b4560c"/></linearGradient></defs>
<rect width="16" height="16" fill="url(#fg)"/>
<path d="M5 2.5h7v2.3H7.4v2.5h3.8v2.2H7.4v4H5z" fill="url(#fo)"/>
<rect x="9.5" y="12.5" width="4" height="1.5" fill="#f2a566" opacity=".8"/>
</svg>
<div class="t" id="title" style="left:30px;top:10px;font-size:12px;color:#707070;letter-spacing:-0.11px">Autodesk Fusion 360 (Personal - Not for Commercial Use)</div>
<div class="a" style="left:1797px;top:15px;width:11px;height:1px;background:#6a6a6a"></div>
<div class="a" style="left:1843px;top:10px;width:10px;height:10px;border:1px solid #6a6a6a"></div>
<svg class="a" style="left:1889px;top:10px" width="11" height="11" viewBox="0 0 11 11"><path d="M.5 .5l10 10M10.5 .5l-10 10" stroke="#6a6a6a" stroke-width="1"/></svg>
<!-- right window edge -->
<div class="a" style="left:1917px;top:0;width:3px;height:20px;background:#1b4aa8"></div>
<div class="a" style="left:1917px;top:20px;width:3px;height:1140px;background:#c9cbd0"></div>
<div class="a" style="left:1917px;top:20px;width:1px;height:1140px;background:#6a6d72"></div>
<div class="a" style="left:1000px;top:0;width:917px;height:1px;background:#1f3f8a"></div>

<!-- TAB STRIP CONTENT -->
<svg class="a" style="left:10px;top:40px" width="15" height="15" viewBox="0 0 15 15" fill="#5f5f5f">
<rect x="0" y="0" width="4" height="4" rx=".6"/><rect x="5.5" y="0" width="4" height="4" rx=".6"/><rect x="11" y="0" width="4" height="4" rx=".6"/>
<rect x="0" y="5.5" width="4" height="4" rx=".6"/><rect x="5.5" y="5.5" width="4" height="4" rx=".6"/><rect x="11" y="5.5" width="4" height="4" rx=".6"/>
<rect x="0" y="11" width="4" height="4" rx=".6"/><rect x="5.5" y="11" width="4" height="4" rx=".6"/><rect x="11" y="11" width="4" height="4" rx=".6"/>
</svg>
<svg class="a" style="left:43px;top:39px" width="14" height="17" viewBox="0 0 14 17"><path d="M0 1a1 1 0 0 1 1-1h8l4.5 4.5V16a1 1 0 0 1-1 1H1a1 1 0 0 1-1-1z" fill="#5f5f5f"/><path d="M9.2 0v4.6h4.6" fill="#cbcbcb"/></svg>
<svg class="a" style="left:62px;top:44px" width="8" height="5"><path d="M0 0h8L4 5z" fill="#5f5f5f"/></svg>
<svg class="a" style="left:88px;top:40px" width="14" height="14" viewBox="0 0 14 14"><path d="M0 1a1 1 0 0 1 1-1h12a1 1 0 0 1 1 1v12a1 1 0 0 1-1 1H2l-2-2z" fill="#8a8a8a"/><rect x="3" y="1" width="8" height="4" fill="#cbcbcb"/><rect x="3.5" y="9" width="7" height="5" fill="#cbcbcb"/><rect x="3" y="1" width="2" height="4" fill="#8a8a8a"/></svg>
<svg class="a" style="left:120px;top:40px" width="15" height="14" viewBox="0 0 15 14"><path d="M12.5 13.5C12.5 8 10 6 4 6" fill="none" stroke="#5f5f5f" stroke-width="2"/><path d="M0 6l5-5v10z" fill="#5f5f5f"/></svg>
<svg class="a" style="left:143px;top:44px" width="7" height="5"><path d="M0 0h7L3.5 5z" fill="#5f5f5f"/></svg>
<svg class="a" style="left:163px;top:40px" width="15" height="14" viewBox="0 0 15 14"><path d="M2.5 13.5C2.5 8 5 6 11 6" fill="none" stroke="#8a8a8a" stroke-width="2"/><path d="M15 6l-5-5v10z" fill="#8a8a8a"/></svg>
<svg class="a" style="left:184px;top:44px" width="7" height="5"><path d="M0 0h7L3.5 5z" fill="#8a8a8a"/></svg>

<div class="a" style="left:198px;top:35px;width:749px;height:28px;background:#f2f2f2;border-radius:4px 4px 0 0"></div>
<svg class="a" style="left:481px;top:42px" width="16" height="15" viewBox="0 0 16 15"><path d="M1 3.5L5 0.5h10v10l-3.5 4H1z" fill="#6a6a6a"/><path d="M1 3.5L5 .5h10L11.5 3.5z" fill="#9a9a9a"/><path d="M11.5 3.5h-10.5v11h10.5z" fill="#707070"/></svg>
<div class="t" id="tab1" style="left:501px;top:42px;font-size:12px;color:#333">kryt elektroniky CQ9318 v11</div>
<svg class="a" style="left:931px;top:44px" width="10" height="10" viewBox="0 0 10 10"><path d="M1 1l8 8M9 1l-8 8" stroke="#666" stroke-width="1.3"/></svg>

<div class="a" style="left:951px;top:35px;width:749px;height:28px;background:#bcbcbc;border-radius:4px 4px 0 0"></div>
<svg class="a" style="left:1210px;top:41px" width="16" height="17" viewBox="0 0 16 17"><path d="M0 1.5h4.5L9 15.5H0z" fill="#a4a4a4"/><path d="M9 1.5h5.5M9 15.5h5.5M14.5 .5v16" stroke="#8a8a8a" stroke-width="1"/></svg>
<div class="t" id="tab2" style="left:1230px;top:42px;font-size:12px;color:#5a5a5a">kryt elektroniky CQ9318 Drawing v8*</div>
<svg class="a" style="left:1684px;top:44px" width="10" height="10" viewBox="0 0 10 10"><path d="M1 1l8 8M9 1l-8 8" stroke="#777" stroke-width="1.3"/></svg>
<div class="a" style="left:1704px;top:35px;width:28px;height:28px;background:#bcbcbc;border-radius:4px 4px 0 0"></div>
<svg class="a" style="left:1711px;top:42px" width="14" height="14" viewBox="0 0 14 14"><path d="M7 0v14M0 7h14" stroke="#5f5f5f" stroke-width="2.6"/></svg>
<svg class="a" style="left:1744px;top:40px" width="17" height="16" viewBox="0 0 17 16"><path d="M0 0h16v11h-3v4l-4-4H0z" fill="#5f5f5f"/><path d="M2.5 2.8h11M2.5 5.3h11M2.5 7.8h8" stroke="#cbcbcb" stroke-width="1.1"/></svg>
<svg class="a" style="left:1777px;top:39px" width="17" height="17" viewBox="0 0 17 17"><circle cx="8.5" cy="8.5" r="8" fill="#5f5f5f"/><path d="M4 13.5l4.5-4.5a3 3 0 1 0 0-0" stroke="#cbcbcb" stroke-width="2" fill="none"/><circle cx="10" cy="7" r="2.6" fill="none" stroke="#cbcbcb" stroke-width="1.6"/><path d="M10 4l3 3" stroke="#5f5f5f" stroke-width="2"/></svg>
<svg class="a" style="left:1810px;top:39px" width="17" height="17" viewBox="0 0 17 17"><circle cx="8.5" cy="8.5" r="8" fill="none" stroke="#5f5f5f" stroke-width="1"/><circle cx="8.5" cy="8.5" r="6.3" fill="#5f5f5f"/><path d="M8.5 4v4.8h3.5" stroke="#cbcbcb" stroke-width="1.4" fill="none"/></svg>
<svg class="a" style="left:1843px;top:39px" width="17" height="17" viewBox="0 0 17 17"><circle cx="8.5" cy="8.5" r="8" fill="#5f5f5f"/><path d="M5.8 6.5a2.7 2.7 0 1 1 3.8 2.4c-.8.4-1.1.9-1.1 1.8" stroke="#cbcbcb" stroke-width="1.9" fill="none"/><rect x="7.5" y="11.8" width="2" height="2" fill="#cbcbcb"/></svg>
<div class="a" style="left:1879px;top:34px;width:25px;height:25px;border-radius:50%;background:#efefef"></div>
<div class="t" style="left:1883px;top:42px;font-size:11px;color:#333;letter-spacing:-.3px">ZV</div>

<!-- TOOLBAR -->
<div class="a" style="left:12px;top:73px;width:111px;height:62px;border:1px solid #dcdcdc;border-radius:5px"></div>
<div class="t" id="design" style="left:43px;top:99px;font-size:11px;font-weight:bold;color:#333;letter-spacing:-0.6px">DESIGN</div>
<svg class="a" style="left:86px;top:102px" width="7" height="4"><path d="M0 0h7L3.5 4z" fill="#333"/></svg>
<div class="t" id="lbl_solid" style="left:144px;top:69px;font-size:11px;color:#0696d7;letter-spacing:-0.3px">SOLID</div>
<div class="a" style="left:133px;top:85px;width:55px;height:3px;background:#0696d7;border-radius:1px"></div>
<div class="t" id="lbl_surface" style="left:223px;top:69px;font-size:11px;color:#333;letter-spacing:-0.67px">SURFACE</div>
<div class="t" id="lbl_sheet" style="left:316px;top:69px;font-size:11px;color:#333;letter-spacing:-0.7px">SHEET METAL</div>
<div class="t" id="lbl_tools" style="left:429px;top:69px;font-size:11px;color:#333;letter-spacing:-0.25px">TOOLS</div>


<!-- toolbar icons -->
<svg class="a" style="left:132px;top:90px" width="33" height="33" viewBox="0 0 33 33">
<path d="M1.5 1.5h27v17M1.5 1.5v27h16" fill="none" stroke="#555" stroke-width="1"/>
<rect x="0" y="0" width="3" height="3" fill="#555"/><rect x="26.5" y="0" width="3" height="3" fill="#555"/><rect x="0" y="26.5" width="3" height="3" fill="#555"/>
<path d="M8.5 8.5h12M8.5 8.5v12M8.5 20.5c6 0 12-6 12-12" fill="none" stroke="#555" stroke-width="1"/>
<rect x="7" y="7" width="3" height="3" fill="#555"/><rect x="19" y="7" width="3" height="3" fill="#555"/><rect x="7" y="19" width="3" height="3" fill="#555"/>
<path d="M24 17v14M17 24h14" stroke="#21a44a" stroke-width="3.6"/>
</svg>
<svg class="a" style="left:176px;top:90px" width="32" height="33" viewBox="0 0 32 33">
<path d="M0 30h18l6-6v-4H0z" fill="#c0c0c0"/><path d="M0 6l6-6h18v22l-6 6H0z" fill="#6aaee3"/><path d="M0 6l6-6h18l-6 6z" fill="#8ccbf7"/><path d="M18 6l6-6v22l-6 6z" fill="#4a94cf"/>
<path d="M28 4v21" stroke="#222" stroke-width="1"/><path d="M28 .5l-2.5 5h5z" fill="#222"/>
</svg>
<svg class="a" style="left:218px;top:90px" width="33" height="32" viewBox="0 0 33 32">
<path d="M2 7C9 1 22 1 30 6" fill="none" stroke="#333" stroke-width="1"/><path d="M1 7.5l5-4v5z" fill="#333"/>
<path d="M0 16c8-6 22-6 29-1v10c-7-5-18-5-24 4l-5-6z" fill="#6aaee3"/><path d="M0 16c8-6 22-6 29-1l-4 3c-6-4-16-4-21 1z" fill="#8ccbf7"/><path d="M0 16v7l5 6v-7z" fill="#4a94cf"/>
<path d="M25 18l4-3v10l-4 4z" fill="#fff" stroke="#333" stroke-width="1"/>
</svg>
<svg class="a" style="left:261px;top:90px" width="33" height="32" viewBox="0 0 33 32">
<path d="M.5 8.5l8-8h24v23l-8 8H.5z" fill="#dcdcdc" stroke="#555" stroke-width="1"/><path d="M24.5 8.5l8-8v23l-8 8z" fill="#c0c0c0"/><path d="M.5 8.5h24v23" fill="none" stroke="#555" stroke-width=".8"/>
<circle cx="12.5" cy="19.5" r="8" fill="#fff" stroke="#555" stroke-width="1"/><path d="M6.5 19a6 6 0 0 0 12 0.5a6 6 0 0 1-5-6.5a6 6 0 0 0-7 6z" fill="#6aaee3"/>
</svg>
<svg class="a" style="left:304px;top:92px" width="29" height="29" viewBox="0 0 29 29">
<rect x=".5" y=".5" width="6" height="6" fill="#fff" stroke="#555" stroke-width="1"/><rect x="21.5" y="0" width="7" height="7" fill="#6aaee3"/><rect x="0" y="21.5" width="7" height="7" fill="#6aaee3"/><rect x="21.5" y="21.5" width="7" height="7" fill="#6aaee3"/>
<path d="M7 3.5h14M3.5 7v14M7 25h14" stroke="#555" stroke-width="1"/>
</svg>
<svg class="a" style="left:347px;top:90px" width="32" height="32" viewBox="0 0 32 32">
<path d="M0 14c0-8 4-12 12-12h6l12 12v10c0 4-4 8-8 8H8c-4 0-8-4-8-8z" fill="#a87fdc" stroke="#8a5cc8" stroke-width="1"/>
<path d="M2 10c2-5 6-6 10-6h6l4 4H10c-4 0-6 2-8 2z" fill="#caa8f0"/><path d="M12 6v26M1 19h24" stroke="#7f53b8" stroke-width=".8"/><path d="M25 14l5-3v12l-5 5z" fill="#8a5cc8"/>
<path d="M25 0l1.6 5 4.9-1.6-3.3 4 4.3 2.9-5.2.3.8 5.2-3.1-4.2-3.1 4.2.8-5.2-5.2-.3 4.3-2.9-3.3-4 4.9 1.6z" fill="#f5a300"/>
</svg>
<div class="a" style="left:389px;top:89px;width:1px;height:51px;background:#d8d8d8"></div>
<div class="t" id="lbl_create" style="left:230px;top:130px;font-size:11px;color:#333;letter-spacing:-0.7px">CREATE</div><svg class="a" style="left:272px;top:132px" width="6" height="4"><path d="M0 0h6L3 4z" fill="#333"/></svg>

<svg class="a" style="left:401px;top:90px" width="32" height="33" viewBox="0 0 32 33">
<path d="M.5 6.5l6-6h6v31H.5z" fill="#dcdcdc" stroke="#555" stroke-width="1"/><path d="M7 6l6-6h9v25l-6 7H7z" fill="#6aaee3"/><path d="M7 6l6-6h9l-6 6z" fill="#8ccbf7"/><path d="M16 6l6-6v25l-6 7z" fill="#4a94cf"/>
<path d="M20 15.5h9" stroke="#222" stroke-width="1.6"/><path d="M31 15.5l-4-3v6z" fill="#222"/>
</svg>
<svg class="a" style="left:444px;top:90px" width="33" height="32" viewBox="0 0 33 32">
<path d="M.5 8l8-7.5h8C25 .5 32 7 32 16v8l-7 7H.5z" fill="#dcdcdc" stroke="#555" stroke-width="1"/>
<path d="M12 8c9 0 13 6 13 15l7-7V16C32 7 25 .5 17 .5z" fill="#6aaee3"/><path d="M25 23l7-7v8l-7 7z" fill="#c0c0c0"/>
</svg>
<svg class="a" style="left:487px;top:90px" width="33" height="33" viewBox="0 0 33 33">
<path d="M.5 8.5l8-8h24v23l-8 8H.5z" fill="#dcdcdc" stroke="#555" stroke-width="1"/><path d="M24.5 8.5l8-8v23l-8 8z" fill="#c0c0c0"/><path d="M.5 8.5h24v23" fill="none" stroke="#555" stroke-width=".8"/>
<rect x="4" y="12" width="16" height="16" fill="#f0f0f0"/><path d="M4 12h7v9h9v7H4z" fill="#6aaee3"/><path d="M4 12h7v9h9v7H4z" fill="#8ccbf7" opacity=".0"/><path d="M11 21h9v7H4z" fill="#8ccbf7"/><path d="M4 12h7v9L4 28z" fill="#4a94cf"/>
</svg>
<svg class="a" style="left:530px;top:90px" width="33" height="33" viewBox="0 0 33 33">
<path d="M11 6l6-6h15v21l-6 7h-6v-14H11z" fill="#6aaee3"/><path d="M11 6l6-6h15l-6 6z" fill="#8ccbf7"/><path d="M26 6l6-6v21l-6 7z" fill="#4a94cf"/>
<path d="M0 14l4-4h16v18l-4 4H0z" fill="#6aaee3"/><path d="M0 14l4-4h7v4z" fill="#8ccbf7"/><path d="M16 21l4 0v7l-4 4z" fill="#4a94cf"/>
</svg>
<svg class="a" style="left:573px;top:90px" width="33" height="32" viewBox="0 0 33 32">
<path d="M2.5 19.5h25l-3 3v8.5H2.5z" fill="#dcdcdc" stroke="#555" stroke-width="1"/><path d="M24.5 22.5l3-3v8.5l-3 3z" fill="#c0c0c0"/>
<path d="M2 6l6-6h21v10l-4 6H2z" fill="#6aaee3"/><path d="M2 6l6-6h21l-5 6z" fill="#8ccbf7"/><path d="M24 6l5-6v10l-5 6z" fill="#4a94cf"/>
<path d="M0 18h22l8-8" fill="none" stroke="#0a86d4" stroke-width="1.2"/>
</svg>
<svg class="a" style="left:616px;top:90px" width="32" height="32" viewBox="0 0 32 32">
<path d="M16 2v28M2 16h28" stroke="#333" stroke-width="2.2"/><path d="M16 0l-5 7h10zM16 32l-5-7h10zM0 16l7-5v10zM32 16l-7-5v10z" fill="#333"/>
</svg>
<svg class="a" style="left:659px;top:92px" width="32" height="30" viewBox="0 0 32 30">
<path d="M.5 8l6-6h6l10 24H.5z" fill="#dcdcdc" stroke="#555" stroke-width="1"/><path d="M9 7l7-5 11 18-7 7z" fill="#6aaee3"/><path d="M22 2l6 14" stroke="#222" stroke-width="1"/><path d="M21 .5l4 4-4.5 1z" fill="#222"/>
</svg>
<div class="t" id="lbl_modify" style="left:520px;top:130px;font-size:11px;color:#333;letter-spacing:-0.7px">MODIFY</div><svg class="a" style="left:562px;top:132px" width="6" height="4"><path d="M0 0h6L3 4z" fill="#333"/></svg>
<div class="a" style="left:700px;top:89px;width:1px;height:51px;background:#d8d8d8"></div>

<svg class="a" style="left:712px;top:90px" width="33" height="32" viewBox="0 0 33 32">
<path d="M.5 20.5h24v11H.5z" fill="#dcdcdc" stroke="#555" stroke-width="1"/><path d="M12.5 20.5v11" stroke="#555"/><path d="M12.5 20.5l3-3h12v11l-3 3" fill="#dcdcdc" stroke="#555" stroke-width="1"/><path d="M24.5 20.5l3-3v11l-3 3z" fill="#c0c0c0"/>
<path d="M.5 6l3-3h12v17H.5z" fill="#6aaee3"/><path d="M.5 6l3-3h12l-3 3z" fill="#8ccbf7"/><path d="M12.5 6l3-3v14l-3 3z" fill="#4a94cf"/>
<path d="M24 1l1.5 4.5 4.5-1.5-3 3.6 4 2.6-4.7.3.7 4.7-3-3.8-3 3.8.7-4.7-4.7-.3 4-2.6-3-3.6 4.5 1.5z" fill="#f5a300"/>
</svg>
<svg class="a" style="left:756px;top:92px" width="32" height="30" viewBox="0 0 32 30">
<path d="M1 8l6-6h5v14l-5 12H1z" fill="#dcdcdc" stroke="#555" stroke-width="1"/><path d="M7 2h5v14H7z" fill="#eee" stroke="#555" stroke-width=".8"/>
<path d="M31 8l-6-4h-1v26l7-2z" fill="#dcdcdc" stroke="#555" stroke-width="1"/><path d="M15 13h5v13h-5z" fill="#c0c0c0" stroke="#555" stroke-width=".8"/>
<path d="M9.5 15v7M18.5 6v6" stroke="#2a8ee0" stroke-width="1"/>
</svg>
<div class="t" id="lbl_assemble" style="left:717px;top:130px;font-size:11px;color:#333;letter-spacing:-0.5px">ASSEMBLE</div><svg class="a" style="left:775px;top:132px" width="6" height="4"><path d="M0 0h6L3 4z" fill="#333"/></svg>
<div class="a" style="left:797px;top:89px;width:1px;height:51px;background:#d8d8d8"></div>

<svg class="a" style="left:832px;top:90px" width="32" height="32" viewBox="0 0 32 32">
<path d="M.5 8.5l8-8h8v31H.5z" fill="#dcdcdc" stroke="#555" stroke-width="1"/><path d="M9 8l8-7.5v23l-8 8z" fill="#5ac57a"/><path d="M21 8l8-7v23l-8 8z" fill="#e59a62"/>
</svg>
<div class="t" id="lbl_construct" style="left:812px;top:130px;font-size:11px;color:#333;letter-spacing:-0.85px">CONSTRUCT</div><svg class="a" style="left:877px;top:132px" width="6" height="4"><path d="M0 0h6L3 4z" fill="#333"/></svg>
<div class="a" style="left:897px;top:89px;width:1px;height:51px;background:#d8d8d8"></div>

<svg class="a" style="left:922px;top:97px" width="30" height="18" viewBox="0 0 30 18">
<path d="M1.5 0v9M28.5 0v9M2 4.5h26" stroke="#666" stroke-width="1"/><path d="M2 4.5l4-2.5v5zM28 4.5l-4-2.5v5z" fill="#666"/>
<rect x="1" y="10" width="28" height="6" fill="#f5a300"/><path d="M4 10v2M7 10v2M10 10v2M13 10v2M16 10v2M19 10v2M22 10v2M25 10v2" stroke="#805000" stroke-width=".8"/>
</svg>
<div class="t" id="lbl_inspect" style="left:911px;top:130px;font-size:11px;color:#333;letter-spacing:-1.1px">INSPECT</div><svg class="a" style="left:955px;top:132px" width="6" height="4"><path d="M0 0h6L3 4z" fill="#333"/></svg>
<div class="a" style="left:975px;top:89px;width:1px;height:51px;background:#d8d8d8"></div>

<svg class="a" style="left:996px;top:91px" width="30" height="30" viewBox="0 0 30 30">
<rect x="0" y="0" width="29" height="29" fill="#8ccbf7" stroke="#4a94cf" stroke-width="1"/><path d="M.5 17c5-8 9-8 13-1s6 4 9 1 6 1 6 1V29H.5z" fill="#4a94cf"/><circle cx="21" cy="8" r="3.2" fill="#fffbd0"/>
</svg>
<div class="t" id="lbl_insert" style="left:990px;top:130px;font-size:11px;color:#333;letter-spacing:-1px">INSERT</div><svg class="a" style="left:1028px;top:132px" width="6" height="4"><path d="M0 0h6L3 4z" fill="#333"/></svg>
<div class="a" style="left:1045px;top:89px;width:1px;height:51px;background:#d8d8d8"></div>

<svg class="a" style="left:1064px;top:87px" width="38" height="38" viewBox="0 0 38 38">
<rect width="38" height="38" fill="#0a96da"/><rect x="3.5" y="3.5" width="27.5" height="21" fill="none" stroke="#7fe08a" stroke-width="1" stroke-dasharray="3 2"/>
<path d="M24 17l0 15 4-3 3 6 3-1.5-3-6 5-.5z" fill="#fff"/>
</svg>
<div class="t" id="lbl_select" style="left:1059px;top:130px;font-size:11px;color:#333;letter-spacing:-0.7px">SELECT</div><svg class="a" style="left:1100px;top:132px" width="6" height="4"><path d="M0 0h6L3 4z" fill="#333"/></svg>

<!-- NAVBAR -->
<div class="a" style="left:832px;top:930px;width:253px;height:23px;background:rgba(240,240,240,.92)"></div>
<svg class="a" style="left:835px;top:934px" width="17" height="17" viewBox="0 0 17 17"><path d="M8.5 1v15" stroke="#333" stroke-width="1.6"/><path d="M8.5 0l-2.5 3h5z" fill="#333"/><path d="M5 6.5C1 7.5 .5 10.5 4 11.5M12 6.5c4 1 4.5 4 1 5.2-2 .6-5 .7-7.5.3" fill="none" stroke="#333" stroke-width="1.4"/><path d="M4.5 10l-3 2 3 2z" fill="#333"/></svg>
<svg class="a" style="left:857px;top:940px" width="6" height="4"><path d="M0 0h6L3 4z" fill="#333"/></svg>
<svg class="a" style="left:868px;top:934px" width="17" height="17" viewBox="0 0 17 17"><rect x="1" y="5.5" width="15" height="10.5" fill="#f4f4f4" stroke="#555" stroke-width="1.1"/><rect x="4" y="9" width="9" height="4" fill="#a8b0bc" stroke="#555" stroke-width=".8"/><path d="M2 5.5l2-4h3l-1 4M8 5.5l3-3h3l-1 3" fill="#ddd" stroke="#555" stroke-width=".8"/></svg>
<svg class="a" style="left:894px;top:934px" width="17" height="17" viewBox="0 0 17 17"><path d="M4.5 16c-2-2-4-5-4-7 0-1 1.2-1.2 2 0l1.5 2V3c0-1.2 1.6-1.2 1.6 0v5V1.5c0-1.2 1.7-1.2 1.7 0V8V2c0-1.2 1.7-1.2 1.7 0v6V3.5c0-1.2 1.7-1.2 1.7 0V11c0 3-1 4-2 5z" fill="#fff" stroke="#333" stroke-width="1"/></svg>
<svg class="a" style="left:920px;top:934px" width="17" height="17" viewBox="0 0 17 17"><circle cx="6" cy="8" r="4.5" fill="#dfeff4" stroke="#444" stroke-width="1.3"/><path d="M9.5 11.5l4 4" stroke="#333" stroke-width="2.2"/><path d="M12.5 1v5M10 3.5h5M10 8h5" stroke="#333" stroke-width="1"/></svg>
<svg class="a" style="left:946px;top:934px" width="17" height="17" viewBox="0 0 17 17"><circle cx="7" cy="7" r="5.8" fill="#f2f2f2" stroke="#444" stroke-width="1.3"/><rect x="4.3" y="4.3" width="5.4" height="5.4" fill="#fff" stroke="#444" stroke-width="1"/><path d="M11 11l4.5 4.5" stroke="#333" stroke-width="2.2"/></svg>
<svg class="a" style="left:968px;top:940px" width="6" height="4"><path d="M0 0h6L3 4z" fill="#333"/></svg>
<svg class="a" style="left:987px;top:934px" width="17" height="17" viewBox="0 0 17 17"><rect x=".8" y="1" width="15.4" height="11" rx="1" fill="#a9c4e8" stroke="#555" stroke-width="1.2"/><rect x="2.5" y="2.7" width="12" height="7.6" fill="#8ab0e0"/><path d="M6 15h5l-1-2.5H7z" fill="#fff" stroke="#555" stroke-width=".9"/></svg>
<svg class="a" style="left:1006px;top:940px" width="6" height="4"><path d="M0 0h6L3 4z" fill="#333"/></svg>
<svg class="a" style="left:1018px;top:934px" width="17" height="17" viewBox="0 0 17 17"><rect x=".5" y=".5" width="16" height="16" fill="#f4f4f4" stroke="#555"/><path d="M3.5 .5v16M6.5 .5v16M9.5 .5v16M12.5 .5v16M.5 3.5h16M.5 6.5h16M.5 9.5h16M.5 12.5h16" stroke="#6a6f80" stroke-width="1"/></svg>
<svg class="a" style="left:1036px;top:940px" width="6" height="4"><path d="M0 0h6L3 4z" fill="#333"/></svg>
<svg class="a" style="left:1048px;top:935px" width="17" height="15" viewBox="0 0 17 15"><rect x=".7" y=".7" width="15.6" height="13.6" fill="#3a5a9a" stroke="#3a5a9a"/><rect x="2.3" y="2.3" width="5.4" height="4.4" fill="#a9c4e8"/><rect x="9.3" y="2.3" width="5.4" height="4.4" fill="#a9c4e8"/><rect x="2.3" y="8.3" width="5.4" height="4.4" fill="#a9c4e8"/><rect x="9.3" y="8.3" width="5.4" height="4.4" fill="#a9c4e8"/></svg>
<svg class="a" style="left:1067px;top:940px" width="6" height="4"><path d="M0 0h6L3 4z" fill="#333"/></svg>
<div class="t" id="cpanel" style="left:1806px;top:937px;font-size:11px;font-weight:bold;color:#222;letter-spacing:0.3px">Control panel</div>
<!-- VIEWCUBE -->
<div class="a" style="left:1827px;top:181px;width:53px;height:53px;background:linear-gradient(#f0f0f0,#dcdcdc);border:1px dashed #a8a8a8"></div>
<div class="a" style="left:1837px;top:190px;width:33px;height:33px;background:linear-gradient(#e2e3e6,#d2d4d8)"></div>
<div class="t" id="back" style="left:1839px;top:199px;font-size:14px;font-weight:bold;color:#8d9097;letter-spacing:0px;transform:scale(.8,1.05);transform-origin:0 0">BACK</div>
<div class="a" style="left:1818px;top:233px;width:64px;height:3px;background:#ee5555"></div>
<div class="a" style="left:1825px;top:236px;width:65px;height:3px;background:linear-gradient(rgba(0,0,0,.12),transparent)"></div>
<div class="a" style="left:1880px;top:172px;width:2px;height:62px;background:#88ee88"></div>
<div class="t" style="left:1806px;top:227px;font-size:13px;color:#ff8080;transform:scaleX(.85);transform-origin:0 0">X</div>
<div class="t" style="left:1876px;top:157px;font-size:13px;color:#80ee80;transform:scaleX(.85);transform-origin:0 0">Y</div>

<!-- TIMELINE -->
<svg class="a" style="left:12px;top:976px" width="13" height="16" viewBox="0 0 13 16"><rect x="0" y="0" width="2" height="16" fill="#444"/><path d="M2 8l10-7v14z" fill="#444"/></svg>
<svg class="a" style="left:36px;top:977px" width="13" height="14" viewBox="0 0 13 14"><path d="M0 7l9-7v14z" fill="#444"/><rect x="10.5" y="4" width="2" height="6" fill="#444"/></svg>
<svg class="a" style="left:62px;top:976px" width="12" height="16" viewBox="0 0 12 16"><path d="M0 0l12 8-12 8z" fill="#444"/></svg>
<svg class="a" style="left:86px;top:977px" width="13" height="14" viewBox="0 0 13 14"><rect x="0" y="4" width="2" height="6" fill="#444"/><path d="M3.5 0l9 7-9 7z" fill="#444"/></svg>
<svg class="a" style="left:112px;top:976px" width="13" height="16" viewBox="0 0 13 16"><path d="M0 1l10 7-10 7z" fill="#444"/><rect x="11" y="0" width="2" height="16" fill="#444"/></svg>
<svg class="a" style="left:147px;top:975px" width="17" height="17" viewBox="0 0 17 17"><path d="M4 2.5h7M2.5 4v8.5M4 14.5h4M13.5 4v4.5" stroke="#444" stroke-width="1"/><rect x="1" y="1" width="2.2" height="2.2" fill="#0a78e0"/><rect x="12" y="1" width="2.2" height="2.2" fill="#0a78e0"/><rect x="1" y="13" width="2.2" height="2.2" fill="#0a78e0"/><path d="M8.3 15l1-2.6 4.5-4.5 1.8 1.8-4.5 4.5z" fill="#f5b43a"/><path d="M13.6 7.7l1.2-1 1.8 1.8-1 1.2z" fill="#ee3333"/><path d="M8.3 15l1-2.3 1.3 1.3z" fill="#555"/></svg>
<div class="a" style="left:155px;top:994px;width:2px;height:5px;background:#c8c8c8"></div>
<svg class="a" style="left:171px;top:975px" width="17" height="17" viewBox="0 0 17 17"><path d="M4 2.5h7M2.5 4v8.5M4 14.5h4M13.5 4v4.5" stroke="#444" stroke-width="1"/><rect x="1" y="1" width="2.2" height="2.2" fill="#0a78e0"/><rect x="12" y="1" width="2.2" height="2.2" fill="#0a78e0"/><rect x="1" y="13" width="2.2" height="2.2" fill="#0a78e0"/><path d="M8.3 15l1-2.6 4.5-4.5 1.8 1.8-4.5 4.5z" fill="#f5b43a"/><path d="M13.6 7.7l1.2-1 1.8 1.8-1 1.2z" fill="#ee3333"/><path d="M8.3 15l1-2.3 1.3 1.3z" fill="#555"/></svg>
<div class="a" style="left:179px;top:994px;width:2px;height:5px;background:#c8c8c8"></div>
<svg class="a" style="left:195px;top:975px" width="17" height="17" viewBox="0 0 17 17"><path d="M4 2.5h7M2.5 4v8.5M4 14.5h4M13.5 4v4.5" stroke="#444" stroke-width="1"/><rect x="1" y="1" width="2.2" height="2.2" fill="#0a78e0"/><rect x="12" y="1" width="2.2" height="2.2" fill="#0a78e0"/><rect x="1" y="13" width="2.2" height="2.2" fill="#0a78e0"/><path d="M8.3 15l1-2.6 4.5-4.5 1.8 1.8-4.5 4.5z" fill="#f5b43a"/><path d="M13.6 7.7l1.2-1 1.8 1.8-1 1.2z" fill="#ee3333"/><path d="M8.3 15l1-2.3 1.3 1.3z" fill="#555"/></svg>
<div class="a" style="left:203px;top:994px;width:2px;height:5px;background:#c8c8c8"></div>
<svg class="a" style="left:219px;top:975px" width="17" height="17" viewBox="0 0 17 17"><path d="M4 2.5h7M2.5 4v8.5M4 14.5h4M13.5 4v4.5" stroke="#444" stroke-width="1"/><rect x="1" y="1" width="2.2" height="2.2" fill="#0a78e0"/><rect x="12" y="1" width="2.2" height="2.2" fill="#0a78e0"/><rect x="1" y="13" width="2.2" height="2.2" fill="#0a78e0"/><path d="M8.3 15l1-2.6 4.5-4.5 1.8 1.8-4.5 4.5z" fill="#f5b43a"/><path d="M13.6 7.7l1.2-1 1.8 1.8-1 1.2z" fill="#ee3333"/><path d="M8.3 15l1-2.3 1.3 1.3z" fill="#555"/></svg>
<div class="a" style="left:227px;top:994px;width:2px;height:5px;background:#c8c8c8"></div>
<svg class="a" style="left:243px;top:975px" width="17" height="17" viewBox="0 0 17 17"><path d="M0 15h9l4-3v-2H0z" fill="#c4c4c4"/><path d="M0 3.5L3 .5h9.5v10l-3 3H0z" fill="#6aaee3"/><path d="M0 3.5L3 .5h9.5l-3 3z" fill="#8ccbf7"/><path d="M9.5 3.5l3-3v10l-3 3z" fill="#4a94cf"/><path d="M15 2.5v10" stroke="#222" stroke-width="1.1"/><path d="M15 0l-2 3h4z" fill="#222"/></svg>
<div class="a" style="left:251px;top:994px;width:2px;height:5px;background:#c8c8c8"></div>
<svg class="a" style="left:267px;top:975px" width="17" height="17" viewBox="0 0 17 17"><path d="M0 15h9l4-3v-2H0z" fill="#c4c4c4"/><path d="M0 3.5L3 .5h9.5v10l-3 3H0z" fill="#6aaee3"/><path d="M0 3.5L3 .5h9.5l-3 3z" fill="#8ccbf7"/><path d="M9.5 3.5l3-3v10l-3 3z" fill="#4a94cf"/><path d="M15 2.5v10" stroke="#222" stroke-width="1.1"/><path d="M15 0l-2 3h4z" fill="#222"/></svg>
<div class="a" style="left:275px;top:994px;width:2px;height:5px;background:#c8c8c8"></div>
<svg class="a" style="left:291px;top:975px" width="17" height="17" viewBox="0 0 17 17"><path d="M0 15h9l4-3v-2H0z" fill="#c4c4c4"/><path d="M0 3.5L3 .5h9.5v10l-3 3H0z" fill="#6aaee3"/><path d="M0 3.5L3 .5h9.5l-3 3z" fill="#8ccbf7"/><path d="M9.5 3.5l3-3v10l-3 3z" fill="#4a94cf"/><path d="M15 2.5v10" stroke="#222" stroke-width="1.1"/><path d="M15 0l-2 3h4z" fill="#222"/></svg>
<div class="a" style="left:299px;top:994px;width:2px;height:5px;background:#c8c8c8"></div>
<svg class="a" style="left:315px;top:975px" width="17" height="17" viewBox="0 0 17 17"><path d="M4 2.5h7M2.5 4v8.5M4 14.5h4M13.5 4v4.5" stroke="#444" stroke-width="1"/><rect x="1" y="1" width="2.2" height="2.2" fill="#0a78e0"/><rect x="12" y="1" width="2.2" height="2.2" fill="#0a78e0"/><rect x="1" y="13" width="2.2" height="2.2" fill="#0a78e0"/><path d="M8.3 15l1-2.6 4.5-4.5 1.8 1.8-4.5 4.5z" fill="#f5b43a"/><path d="M13.6 7.7l1.2-1 1.8 1.8-1 1.2z" fill="#ee3333"/><path d="M8.3 15l1-2.3 1.3 1.3z" fill="#555"/></svg>
<div class="a" style="left:323px;top:994px;width:2px;height:5px;background:#c8c8c8"></div>
<svg class="a" style="left:339px;top:975px" width="17" height="17" viewBox="0 0 17 17"><path d="M0 15h9l4-3v-2H0z" fill="#c4c4c4"/><path d="M0 3.5L3 .5h9.5v10l-3 3H0z" fill="#6aaee3"/><path d="M0 3.5L3 .5h9.5l-3 3z" fill="#8ccbf7"/><path d="M9.5 3.5l3-3v10l-3 3z" fill="#4a94cf"/><path d="M15 2.5v10" stroke="#222" stroke-width="1.1"/><path d="M15 0l-2 3h4z" fill="#222"/></svg>
<div class="a" style="left:347px;top:994px;width:2px;height:5px;background:#c8c8c8"></div>
<svg class="a" style="left:363px;top:975px" width="17" height="17" viewBox="0 0 17 17"><path d="M4 2.5h7M2.5 4v8.5M4 14.5h4M13.5 4v4.5" stroke="#444" stroke-width="1"/><rect x="1" y="1" width="2.2" height="2.2" fill="#0a78e0"/><rect x="12" y="1" width="2.2" height="2.2" fill="#0a78e0"/><rect x="1" y="13" width="2.2" height="2.2" fill="#0a78e0"/><path d="M8.3 15l1-2.6 4.5-4.5 1.8 1.8-4.5 4.5z" fill="#f5b43a"/><path d="M13.6 7.7l1.2-1 1.8 1.8-1 1.2z" fill="#ee3333"/><path d="M8.3 15l1-2.3 1.3 1.3z" fill="#555"/></svg>
<div class="a" style="left:371px;top:994px;width:2px;height:5px;background:#c8c8c8"></div>
<svg class="a" style="left:387px;top:975px" width="17" height="17" viewBox="0 0 17 17"><path d="M0 15h9l4-3v-2H0z" fill="#c4c4c4"/><path d="M0 3.5L3 .5h9.5v10l-3 3H0z" fill="#6aaee3"/><path d="M0 3.5L3 .5h9.5l-3 3z" fill="#8ccbf7"/><path d="M9.5 3.5l3-3v10l-3 3z" fill="#4a94cf"/><path d="M15 2.5v10" stroke="#222" stroke-width="1.1"/><path d="M15 0l-2 3h4z" fill="#222"/></svg>
<div class="a" style="left:395px;top:994px;width:2px;height:5px;background:#c8c8c8"></div>
<svg class="a" style="left:411px;top:975px" width="17" height="17" viewBox="0 0 17 17"><path d="M4 2.5h7M2.5 4v8.5M4 14.5h4M13.5 4v4.5" stroke="#444" stroke-width="1"/><rect x="1" y="1" width="2.2" height="2.2" fill="#0a78e0"/><rect x="12" y="1" width="2.2" height="2.2" fill="#0a78e0"/><rect x="1" y="13" width="2.2" height="2.2" fill="#0a78e0"/><path d="M8.3 15l1-2.6 4.5-4.5 1.8 1.8-4.5 4.5z" fill="#f5b43a"/><path d="M13.6 7.7l1.2-1 1.8 1.8-1 1.2z" fill="#ee3333"/><path d="M8.3 15l1-2.3 1.3 1.3z" fill="#555"/></svg>
<div class="a" style="left:419px;top:994px;width:2px;height:5px;background:#c8c8c8"></div>
<svg class="a" style="left:435px;top:975px" width="17" height="17" viewBox="0 0 17 17"><path d="M0 15h9l4-3v-2H0z" fill="#c4c4c4"/><path d="M0 3.5L3 .5h9.5v10l-3 3H0z" fill="#6aaee3"/><path d="M0 3.5L3 .5h9.5l-3 3z" fill="#8ccbf7"/><path d="M9.5 3.5l3-3v10l-3 3z" fill="#4a94cf"/><path d="M15 2.5v10" stroke="#222" stroke-width="1.1"/><path d="M15 0l-2 3h4z" fill="#222"/></svg>
<div class="a" style="left:443px;top:994px;width:2px;height:5px;background:#c8c8c8"></div>
<svg class="a" style="left:459px;top:975px" width="17" height="17" viewBox="0 0 17 17"><path d="M4 2.5h7M2.5 4v8.5M4 14.5h4M13.5 4v4.5" stroke="#444" stroke-width="1"/><rect x="1" y="1" width="2.2" height="2.2" fill="#0a78e0"/><rect x="12" y="1" width="2.2" height="2.2" fill="#0a78e0"/><rect x="1" y="13" width="2.2" height="2.2" fill="#0a78e0"/><path d="M8.3 15l1-2.6 4.5-4.5 1.8 1.8-4.5 4.5z" fill="#f5b43a"/><path d="M13.6 7.7l1.2-1 1.8 1.8-1 1.2z" fill="#ee3333"/><path d="M8.3 15l1-2.3 1.3 1.3z" fill="#555"/></svg>
<div class="a" style="left:467px;top:994px;width:2px;height:5px;background:#c8c8c8"></div>
<svg class="a" style="left:483px;top:975px" width="17" height="17" viewBox="0 0 17 17"><path d="M0 15h9l4-3v-2H0z" fill="#c4c4c4"/><path d="M0 3.5L3 .5h9.5v10l-3 3H0z" fill="#6aaee3"/><path d="M0 3.5L3 .5h9.5l-3 3z" fill="#8ccbf7"/><path d="M9.5 3.5l3-3v10l-3 3z" fill="#4a94cf"/><path d="M15 2.5v10" stroke="#222" stroke-width="1.1"/><path d="M15 0l-2 3h4z" fill="#222"/></svg>
<div class="a" style="left:491px;top:994px;width:2px;height:5px;background:#c8c8c8"></div>
<svg class="a" style="left:507px;top:975px" width="17" height="17" viewBox="0 0 17 17"><path d="M0 15h9l4-3v-2H0z" fill="#c4c4c4"/><path d="M0 3.5L3 .5h9.5v10l-3 3H0z" fill="#6aaee3"/><path d="M0 3.5L3 .5h9.5l-3 3z" fill="#8ccbf7"/><path d="M9.5 3.5l3-3v10l-3 3z" fill="#4a94cf"/><path d="M15 2.5v10" stroke="#222" stroke-width="1.1"/><path d="M15 0l-2 3h4z" fill="#222"/></svg>
<div class="a" style="left:515px;top:994px;width:2px;height:5px;background:#c8c8c8"></div>
<svg class="a" style="left:531px;top:975px" width="17" height="17" viewBox="0 0 17 17"><path d="M0 15h9l4-3v-2H0z" fill="#c4c4c4"/><path d="M0 3.5L3 .5h9.5v10l-3 3H0z" fill="#6aaee3"/><path d="M0 3.5L3 .5h9.5l-3 3z" fill="#8ccbf7"/><path d="M9.5 3.5l3-3v10l-3 3z" fill="#4a94cf"/><path d="M15 2.5v10" stroke="#222" stroke-width="1.1"/><path d="M15 0l-2 3h4z" fill="#222"/></svg>
<div class="a" style="left:539px;top:994px;width:2px;height:5px;background:#c8c8c8"></div>
<svg class="a" style="left:555px;top:975px" width="17" height="17" viewBox="0 0 17 17"><path d="M4 2.5h7M2.5 4v8.5M4 14.5h4M13.5 4v4.5" stroke="#444" stroke-width="1"/><rect x="1" y="1" width="2.2" height="2.2" fill="#0a78e0"/><rect x="12" y="1" width="2.2" height="2.2" fill="#0a78e0"/><rect x="1" y="13" width="2.2" height="2.2" fill="#0a78e0"/><path d="M8.3 15l1-2.6 4.5-4.5 1.8 1.8-4.5 4.5z" fill="#f5b43a"/><path d="M13.6 7.7l1.2-1 1.8 1.8-1 1.2z" fill="#ee3333"/><path d="M8.3 15l1-2.3 1.3 1.3z" fill="#555"/></svg>
<div class="a" style="left:563px;top:994px;width:2px;height:5px;background:#c8c8c8"></div>
<svg class="a" style="left:579px;top:975px" width="17" height="17" viewBox="0 0 17 17"><path d="M0 15h9l4-3v-2H0z" fill="#c4c4c4"/><path d="M0 3.5L3 .5h9.5v10l-3 3H0z" fill="#6aaee3"/><path d="M0 3.5L3 .5h9.5l-3 3z" fill="#8ccbf7"/><path d="M9.5 3.5l3-3v10l-3 3z" fill="#4a94cf"/><path d="M15 2.5v10" stroke="#222" stroke-width="1.1"/><path d="M15 0l-2 3h4z" fill="#222"/></svg>
<div class="a" style="left:587px;top:994px;width:2px;height:5px;background:#c8c8c8"></div>
<svg class="a" style="left:603px;top:975px" width="17" height="17" viewBox="0 0 17 17"><path d="M4 2.5h7M2.5 4v8.5M4 14.5h4M13.5 4v4.5" stroke="#444" stroke-width="1"/><rect x="1" y="1" width="2.2" height="2.2" fill="#0a78e0"/><rect x="12" y="1" width="2.2" height="2.2" fill="#0a78e0"/><rect x="1" y="13" width="2.2" height="2.2" fill="#0a78e0"/><path d="M8.3 15l1-2.6 4.5-4.5 1.8 1.8-4.5 4.5z" fill="#f5b43a"/><path d="M13.6 7.7l1.2-1 1.8 1.8-1 1.2z" fill="#ee3333"/><path d="M8.3 15l1-2.3 1.3 1.3z" fill="#555"/></svg>
<div class="a" style="left:611px;top:994px;width:2px;height:5px;background:#c8c8c8"></div>
<svg class="a" style="left:627px;top:975px" width="17" height="17" viewBox="0 0 17 17"><path d="M0 15h9l4-3v-2H0z" fill="#c4c4c4"/><path d="M0 3.5L3 .5h9.5v10l-3 3H0z" fill="#6aaee3"/><path d="M0 3.5L3 .5h9.5l-3 3z" fill="#8ccbf7"/><path d="M9.5 3.5l3-3v10l-3 3z" fill="#4a94cf"/><path d="M15 2.5v10" stroke="#222" stroke-width="1.1"/><path d="M15 0l-2 3h4z" fill="#222"/></svg>
<div class="a" style="left:635px;top:994px;width:2px;height:5px;background:#c8c8c8"></div>
<svg class="a" style="left:651px;top:975px" width="17" height="17" viewBox="0 0 17 17"><path d="M0 15h9l4-3v-2H0z" fill="#c4c4c4"/><path d="M0 3.5L3 .5h9.5v10l-3 3H0z" fill="#6aaee3"/><path d="M0 3.5L3 .5h9.5l-3 3z" fill="#8ccbf7"/><path d="M9.5 3.5l3-3v10l-3 3z" fill="#4a94cf"/><path d="M15 2.5v10" stroke="#222" stroke-width="1.1"/><path d="M15 0l-2 3h4z" fill="#222"/></svg>
<div class="a" style="left:659px;top:994px;width:2px;height:5px;background:#c8c8c8"></div>
<svg class="a" style="left:675px;top:975px" width="17" height="17" viewBox="0 0 17 17"><path d="M0 15h9l4-3v-2H0z" fill="#c4c4c4"/><path d="M0 3.5L3 .5h9.5v10l-3 3H0z" fill="#6aaee3"/><path d="M0 3.5L3 .5h9.5l-3 3z" fill="#8ccbf7"/><path d="M9.5 3.5l3-3v10l-3 3z" fill="#4a94cf"/><path d="M15 2.5v10" stroke="#222" stroke-width="1.1"/><path d="M15 0l-2 3h4z" fill="#222"/></svg>
<div class="a" style="left:683px;top:994px;width:2px;height:5px;background:#c8c8c8"></div>
<svg class="a" style="left:699px;top:975px" width="17" height="17" viewBox="0 0 17 17"><path d="M0 15h9l4-3v-2H0z" fill="#c4c4c4"/><path d="M0 3.5L3 .5h9.5v10l-3 3H0z" fill="#6aaee3"/><path d="M0 3.5L3 .5h9.5l-3 3z" fill="#8ccbf7"/><path d="M9.5 3.5l3-3v10l-3 3z" fill="#4a94cf"/><path d="M15 2.5v10" stroke="#222" stroke-width="1.1"/><path d="M15 0l-2 3h4z" fill="#222"/></svg>
<div class="a" style="left:707px;top:994px;width:2px;height:5px;background:#c8c8c8"></div>
<svg class="a" style="left:723px;top:975px" width="17" height="17" viewBox="0 0 17 17"><path d="M.5 3.5l3-3h12.5v12.5l-3 3H.5z" fill="#dcdcdc" stroke="#555" stroke-width="1"/><path d="M13 3.5l3-3v12.5l-3 3z" fill="#c0c0c0"/><path d="M.5 3.5H13v12.5" fill="none" stroke="#555" stroke-width=".7"/><circle cx="6.8" cy="9.8" r="4.3" fill="#fff" stroke="#555" stroke-width="1"/><path d="M3.6 9.6a3.2 3.2 0 0 0 6.4.3 3.2 3.2 0 0 1-2.7-3.4 3.2 3.2 0 0 0-3.7 3.1z" fill="#6aaee3"/></svg>
<div class="a" style="left:731px;top:994px;width:2px;height:5px;background:#c8c8c8"></div>
<svg class="a" style="left:747px;top:975px" width="17" height="17" viewBox="0 0 17 17"><path d="M.5 3.5l3-3h12.5v12.5l-3 3H.5z" fill="#dcdcdc" stroke="#555" stroke-width="1"/><path d="M13 3.5l3-3v12.5l-3 3z" fill="#c0c0c0"/><path d="M.5 3.5H13v12.5" fill="none" stroke="#555" stroke-width=".7"/><circle cx="6.8" cy="9.8" r="4.3" fill="#fff" stroke="#555" stroke-width="1"/><path d="M3.6 9.6a3.2 3.2 0 0 0 6.4.3 3.2 3.2 0 0 1-2.7-3.4 3.2 3.2 0 0 0-3.7 3.1z" fill="#6aaee3"/></svg>
<div class="a" style="left:755px;top:994px;width:2px;height:5px;background:#c8c8c8"></div>
<svg class="a" style="left:771px;top:975px" width="17" height="17" viewBox="0 0 17 17"><path d="M.5 3.5l3-3h12.5v12.5l-3 3H.5z" fill="#dcdcdc" stroke="#555" stroke-width="1"/><path d="M13 3.5l3-3v12.5l-3 3z" fill="#c0c0c0"/><path d="M.5 3.5H13v12.5" fill="none" stroke="#555" stroke-width=".7"/><circle cx="6.8" cy="9.8" r="4.3" fill="#fff" stroke="#555" stroke-width="1"/><path d="M3.6 9.6a3.2 3.2 0 0 0 6.4.3 3.2 3.2 0 0 1-2.7-3.4 3.2 3.2 0 0 0-3.7 3.1z" fill="#6aaee3"/></svg>
<div class="a" style="left:779px;top:994px;width:2px;height:5px;background:#c8c8c8"></div>
<svg class="a" style="left:795px;top:975px" width="17" height="17" viewBox="0 0 17 17"><path d="M.5 3.5l3-3h12.5v12.5l-3 3H.5z" fill="#dcdcdc" stroke="#555" stroke-width="1"/><path d="M13 3.5l3-3v12.5l-3 3z" fill="#c0c0c0"/><path d="M.5 3.5H13v12.5" fill="none" stroke="#555" stroke-width=".7"/><circle cx="6.8" cy="9.8" r="4.3" fill="#fff" stroke="#555" stroke-width="1"/><path d="M3.6 9.6a3.2 3.2 0 0 0 6.4.3 3.2 3.2 0 0 1-2.7-3.4 3.2 3.2 0 0 0-3.7 3.1z" fill="#6aaee3"/></svg>
<div class="a" style="left:803px;top:994px;width:2px;height:5px;background:#c8c8c8"></div>
<svg class="a" style="left:819px;top:975px" width="17" height="17" viewBox="0 0 17 17"><path d="M.5 3.5l3-3h12.5v12.5l-3 3H.5z" fill="#dcdcdc" stroke="#555" stroke-width="1"/><path d="M13 3.5l3-3v12.5l-3 3z" fill="#c0c0c0"/><path d="M.5 3.5H13v12.5" fill="none" stroke="#555" stroke-width=".7"/><circle cx="6.8" cy="9.8" r="4.3" fill="#fff" stroke="#555" stroke-width="1"/><path d="M3.6 9.6a3.2 3.2 0 0 0 6.4.3 3.2 3.2 0 0 1-2.7-3.4 3.2 3.2 0 0 0-3.7 3.1z" fill="#6aaee3"/></svg>
<div class="a" style="left:827px;top:994px;width:2px;height:5px;background:#c8c8c8"></div>
<svg class="a" style="left:843px;top:975px" width="17" height="17" viewBox="0 0 17 17"><path d="M.5 3.5l3-3h12.5v12.5l-3 3H.5z" fill="#dcdcdc" stroke="#555" stroke-width="1"/><path d="M13 3.5l3-3v12.5l-3 3z" fill="#c0c0c0"/><path d="M.5 3.5H13v12.5" fill="none" stroke="#555" stroke-width=".7"/><circle cx="6.8" cy="9.8" r="4.3" fill="#fff" stroke="#555" stroke-width="1"/><path d="M3.6 9.6a3.2 3.2 0 0 0 6.4.3 3.2 3.2 0 0 1-2.7-3.4 3.2 3.2 0 0 0-3.7 3.1z" fill="#6aaee3"/></svg>
<div class="a" style="left:851px;top:994px;width:2px;height:5px;background:#c8c8c8"></div>
<svg class="a" style="left:867px;top:975px" width="17" height="17" viewBox="0 0 17 17"><path d="M.5 3.5l3-3h12.5v12.5l-3 3H.5z" fill="#dcdcdc" stroke="#555" stroke-width="1"/><path d="M13 3.5l3-3v12.5l-3 3z" fill="#c0c0c0"/><path d="M.5 3.5H13v12.5" fill="none" stroke="#555" stroke-width=".7"/><circle cx="6.8" cy="9.8" r="4.3" fill="#fff" stroke="#555" stroke-width="1"/><path d="M3.6 9.6a3.2 3.2 0 0 0 6.4.3 3.2 3.2 0 0 1-2.7-3.4 3.2 3.2 0 0 0-3.7 3.1z" fill="#6aaee3"/></svg>
<div class="a" style="left:875px;top:994px;width:2px;height:5px;background:#c8c8c8"></div>
<svg class="a" style="left:891px;top:975px" width="17" height="17" viewBox="0 0 17 17"><path d="M.5 3.5l3-3h12.5v12.5l-3 3H.5z" fill="#dcdcdc" stroke="#555" stroke-width="1"/><path d="M13 3.5l3-3v12.5l-3 3z" fill="#c0c0c0"/><path d="M.5 3.5H13v12.5" fill="none" stroke="#555" stroke-width=".7"/><circle cx="6.8" cy="9.8" r="4.3" fill="#fff" stroke="#555" stroke-width="1"/><path d="M3.6 9.6a3.2 3.2 0 0 0 6.4.3 3.2 3.2 0 0 1-2.7-3.4 3.2 3.2 0 0 0-3.7 3.1z" fill="#6aaee3"/></svg>
<div class="a" style="left:899px;top:994px;width:2px;height:5px;background:#c8c8c8"></div>
<svg class="a" style="left:915px;top:975px" width="17" height="17" viewBox="0 0 17 17"><path d="M.5 3.5l3-3h12.5v12.5l-3 3H.5z" fill="#dcdcdc" stroke="#555" stroke-width="1"/><path d="M13 3.5l3-3v12.5l-3 3z" fill="#c0c0c0"/><path d="M.5 3.5H13v12.5" fill="none" stroke="#555" stroke-width=".7"/><circle cx="6.8" cy="9.8" r="4.3" fill="#fff" stroke="#555" stroke-width="1"/><path d="M3.6 9.6a3.2 3.2 0 0 0 6.4.3 3.2 3.2 0 0 1-2.7-3.4 3.2 3.2 0 0 0-3.7 3.1z" fill="#6aaee3"/></svg>
<div class="a" style="left:923px;top:994px;width:2px;height:5px;background:#c8c8c8"></div>
<svg class="a" style="left:939px;top:975px" width="17" height="17" viewBox="0 0 17 17"><path d="M.5 3.5l3-3h12.5v12.5l-3 3H.5z" fill="#dcdcdc" stroke="#555" stroke-width="1"/><path d="M13 3.5l3-3v12.5l-3 3z" fill="#c0c0c0"/><path d="M.5 3.5H13v12.5" fill="none" stroke="#555" stroke-width=".7"/><circle cx="6.8" cy="9.8" r="4.3" fill="#fff" stroke="#555" stroke-width="1"/><path d="M3.6 9.6a3.2 3.2 0 0 0 6.4.3 3.2 3.2 0 0 1-2.7-3.4 3.2 3.2 0 0 0-3.7 3.1z" fill="#6aaee3"/></svg>
<div class="a" style="left:947px;top:994px;width:2px;height:5px;background:#c8c8c8"></div>
<svg class="a" style="left:963px;top:975px" width="17" height="17" viewBox="0 0 17 17"><path d="M.5 3.5l3-3h12.5v12.5l-3 3H.5z" fill="#dcdcdc" stroke="#555" stroke-width="1"/><path d="M13 3.5l3-3v12.5l-3 3z" fill="#c0c0c0"/><path d="M.5 3.5H13v12.5" fill="none" stroke="#555" stroke-width=".7"/><circle cx="6.8" cy="9.8" r="4.3" fill="#fff" stroke="#555" stroke-width="1"/><path d="M3.6 9.6a3.2 3.2 0 0 0 6.4.3 3.2 3.2 0 0 1-2.7-3.4 3.2 3.2 0 0 0-3.7 3.1z" fill="#6aaee3"/></svg>
<div class="a" style="left:971px;top:994px;width:2px;height:5px;background:#c8c8c8"></div>
<svg class="a" style="left:987px;top:975px" width="17" height="17" viewBox="0 0 17 17"><path d="M.5 3.5l3-3h12.5v12.5l-3 3H.5z" fill="#dcdcdc" stroke="#555" stroke-width="1"/><path d="M13 3.5l3-3v12.5l-3 3z" fill="#c0c0c0"/><path d="M.5 3.5H13v12.5" fill="none" stroke="#555" stroke-width=".7"/><circle cx="6.8" cy="9.8" r="4.3" fill="#fff" stroke="#555" stroke-width="1"/><path d="M3.6 9.6a3.2 3.2 0 0 0 6.4.3 3.2 3.2 0 0 1-2.7-3.4 3.2 3.2 0 0 0-3.7 3.1z" fill="#6aaee3"/></svg>
<div class="a" style="left:995px;top:994px;width:2px;height:5px;background:#c8c8c8"></div>
<svg class="a" style="left:1011px;top:975px" width="17" height="17" viewBox="0 0 17 17"><path d="M.5 3.5l3-3h12.5v12.5l-3 3H.5z" fill="#dcdcdc" stroke="#555" stroke-width="1"/><path d="M13 3.5l3-3v12.5l-3 3z" fill="#c0c0c0"/><path d="M.5 3.5H13v12.5" fill="none" stroke="#555" stroke-width=".7"/><circle cx="6.8" cy="9.8" r="4.3" fill="#fff" stroke="#555" stroke-width="1"/><path d="M3.6 9.6a3.2 3.2 0 0 0 6.4.3 3.2 3.2 0 0 1-2.7-3.4 3.2 3.2 0 0 0-3.7 3.1z" fill="#6aaee3"/></svg>
<div class="a" style="left:1019px;top:994px;width:2px;height:5px;background:#c8c8c8"></div>
<svg class="a" style="left:1035px;top:975px" width="17" height="17" viewBox="0 0 17 17"><path d="M.5 3.5l3-3h12.5v12.5l-3 3H.5z" fill="#dcdcdc" stroke="#555" stroke-width="1"/><path d="M13 3.5l3-3v12.5l-3 3z" fill="#c0c0c0"/><path d="M.5 3.5H13v12.5" fill="none" stroke="#555" stroke-width=".7"/><circle cx="6.8" cy="9.8" r="4.3" fill="#fff" stroke="#555" stroke-width="1"/><path d="M3.6 9.6a3.2 3.2 0 0 0 6.4.3 3.2 3.2 0 0 1-2.7-3.4 3.2 3.2 0 0 0-3.7 3.1z" fill="#6aaee3"/></svg>
<div class="a" style="left:1043px;top:994px;width:2px;height:5px;background:#c8c8c8"></div>
<div class="a" style="left:155px;top:998px;width:890px;height:2px;background:#c8c8c8"></div>
<svg class="a" style="left:1049px;top:969px" width="13" height="33" viewBox="0 0 13 33"><path d="M0 0h12v3l-4.5 5h-3L0 3z" fill="#555"/><rect x="5" y="6" width="2.2" height="26" fill="#555"/></svg>
<svg class="a" style="left:1887px;top:975px" width="17" height="17" viewBox="0 0 16 16"><g fill="#9a9a9a"><circle cx="8" cy="8" r="5.6"/><rect x="6.4" y="0" width="3.2" height="16"/><rect x="0" y="6.4" width="16" height="3.2"/><rect x="6.4" y="0" width="3.2" height="16" transform="rotate(45 8 8)"/><rect x="6.4" y="0" width="3.2" height="16" transform="rotate(-45 8 8)"/></g><circle cx="8" cy="8" r="2.5" fill="#f2f2f2"/></svg>
<!-- TEXT COMMANDS -->
<div class="a" style="left:7px;top:1016px;width:10px;height:10px;border-radius:50%;background:#333"></div><div class="a" style="left:9px;top:1020px;width:6px;height:2px;background:#f2f2f2"></div>
<div class="t" id="txtcmd" style="left:26px;top:1015px;font-size:11px;color:#555;letter-spacing:-0.67px">TEXT COMMANDS</div>
<div class="a" style="left:3px;top:1032px;width:1912px;height:102px;background:#fff;border:1px solid #8a8a8a"></div>
<div class="a" style="left:3px;top:1136px;width:1799px;height:21px;background:#fff;border:1px solid #8a8a8a"></div>
<div class="t" id="placeholder" style="left:6px;top:1141px;font-size:11px;color:#8a8a8a;letter-spacing:-0.16px">Type Text Commands Here - Type '?' or '??' For Help</div>
<div class="a" style="left:1804px;top:1140px;width:12px;height:12px;border-radius:50%;border:1px solid #333;background:#fff"></div><div class="a" style="left:1807px;top:1143px;width:6px;height:6px;border-radius:50%;background:#222"></div>
<div class="t" id="txt" style="left:1822px;top:1141px;font-size:11px;color:#111">Txt</div>
<div class="a" style="left:1845px;top:1140px;width:12px;height:12px;border-radius:50%;border:1px solid #333;background:#fff"></div>
<div class="t" id="py" style="left:1863px;top:1141px;font-size:11px;color:#111">Py</div>
<div class="a" style="left:1882px;top:1140px;width:12px;height:12px;border-radius:50%;border:1px solid #333;background:#fff"></div>
<div class="t" id="js" style="left:1900px;top:1141px;font-size:11px;color:#111">Js</div>

<!-- TASKBAR -->
<div class="a" style="left:0;top:1160px;width:48px;height:40px;background:#1f3340"></div>
<div class="a" style="left:48px;top:1160px;width:344px;height:40px;background:#f0f0f0;border-top:1px solid #d8d8d8"></div>
<svg class="a" style="left:16px;top:1172px" width="17" height="17" viewBox="0 0 17 17"><path d="M0 2.3l7-1v6.7H0zM8 1.1l9-1.1v8H8zM0 9h7v6.7l-7-1zM8 9h9v8l-9-1.2z" fill="#fff"/></svg>
<svg class="a" style="left:60px;top:1171px" width="18" height="18" viewBox="0 0 18 18"><circle cx="11" cy="7" r="5.5" fill="none" stroke="#222" stroke-width="1.4"/><path d="M7 11l-6 6" stroke="#222" stroke-width="1.6"/></svg>
<div class="t" id="search" style="left:88px;top:1172px;font-size:15px;color:#222;letter-spacing:-0.12px">Sem zadejte hledaný výraz</div>
<svg class="a" style="left:407px;top:1172px" width="18" height="16" viewBox="0 0 18 16"><path d="M.5 1.5h12M.5 14.5h12M2.5 4.5h9v7h-9z" fill="none" stroke="#fff" stroke-width="1.2"/><path d="M15.5 1v2M15.5 5v6M15.5 13v2" stroke="#fff" stroke-width="1.6"/></svg>
<svg class="a" style="left:456px;top:1168px" width="25" height="23" viewBox="0 0 25 23"><rect x="1" y="6" width="23" height="16" fill="#f4f4f4" stroke="#aab" stroke-width=".8"/><path d="M3 9h19M3 12h19M3 15h19M3 18h19" stroke="#c8ccd4" stroke-width=".8"/><rect x="8" y="0" width="9" height="8" fill="#3a6b8a"/><path d="M7 8h11l-5.5 9z" fill="#fff" stroke="#3a6b8a" stroke-width="1.3"/></svg>
<svg class="a" style="left:505px;top:1169px" width="23" height="21" viewBox="0 0 23 21"><path d="M0 2h8l2 2h13v17H0z" fill="#f5c542"/><path d="M0 6h23v15H0z" fill="#ffd766"/><path d="M6 13h11v8h-2v-5H8v5H6z" fill="#2c7fd8"/></svg>
<svg class="a" style="left:553px;top:1168px" width="25" height="24" viewBox="0 0 25 24"><rect x=".5" y=".5" width="24" height="23" rx="1.5" fill="#2540b8" stroke="#1a2a80"/><rect x="6" y="1" width="13" height="7" fill="#e8e8f0"/><rect x="13" y="2" width="3" height="5" fill="#2540b8"/><rect x="3" y="11" width="19" height="11" fill="#f4d4dc"/><path d="M4 14h17M4 17h17M4 20h17" stroke="#e0506a" stroke-width="1"/></svg>
<div class="a" style="left:590px;top:1160px;width:47px;height:40px;background:#4a5a63"></div>
<svg class="a" style="left:602px;top:1168px" width="24" height="24" viewBox="0 0 24 24"><rect width="24" height="24" fill="#f9dcc0"/><path d="M6 4h12v4.5H11v3h6V15h-6v6H6z" fill="#d97a22"/><path d="M6 4h12v2H6z" fill="#f0a050"/><text x="16" y="22" font-size="4" fill="#e8903a" font-family="Liberation Sans">360</text></svg>
<svg class="a" style="left:655px;top:1168px" width="18" height="23" viewBox="0 0 18 23"><path d="M1 1h16v5H7v3h9v5H7v3h10v5H1z" fill="#d9832a"/><path d="M1 1h4v21H1z" fill="#b8651a"/></svg>
<svg class="a" style="left:700px;top:1168px" width="25" height="23" viewBox="0 0 25 23"><path d="M11 3C4 3 0 8 0 13s4 8 8 7 2-4 5-4 6 2 8-1 1-12-10-12z" fill="#d8e0f0" stroke="#9aa" stroke-width=".6"/><circle cx="6" cy="10" r="2" fill="#e33"/><circle cx="10" cy="6.5" r="2" fill="#3b3"/><circle cx="15" cy="7" r="2" fill="#39f"/><path d="M24 1L12 21" stroke="#c9893a" stroke-width="2.6"/><path d="M13 18l-2 4 3-2z" fill="#333"/></svg>
<svg class="a" style="left:749px;top:1168px" width="24" height="24" viewBox="0 0 24 24"><circle cx="12" cy="12" r="11.5" fill="#db4437"/><path d="M12 12L2.2 6A11.5 11.5 0 0 0 9 23.2z" fill="#0f9d58"/><path d="M12 12l-3 11.2A11.5 11.5 0 0 0 23.5 12V7H12z" fill="#ffcd40"/><path d="M12 6.5h11a11.5 11.5 0 0 0-.2-.2" fill="#ffcd40"/><circle cx="12" cy="12" r="5.2" fill="#fff"/><circle cx="12" cy="12" r="4.1" fill="#4285f4"/></svg>
<svg class="a" style="left:797px;top:1167px" width="25" height="25" viewBox="0 0 25 25"><circle cx="12.5" cy="12.5" r="12" fill="#1f8fd8"/><path d="M3 17c1-9 16-11 19-2-1 3-6 3-9 2 3 5 9 5 11 1-3 7-16 8-21-1z" fill="#5bd66b" opacity=".9"/><path d="M2 14c0-8 8-12 15-11s7 8 3 9-5-2-10-1-6 6-3 10C4 20 2 17 2 14z" fill="#1a6ccf"/><circle cx="14" cy="15" r="4" fill="#1f8fd8"/></svg>
<svg class="a" style="left:847px;top:1168px" width="25" height="24" viewBox="0 0 25 24"><path d="M8 2c3-2 6 0 6 3 3-1 6 1 5 4 3 1 5 4 3 7s-5 2-6 1c0 3-3 6-6 5s-3-4-2-5c-3 1-6-1-6-4s3-4 4-4c-2-2-1-5 2-7z" fill="#c81414"/><text x="9" y="15" font-size="7" fill="#f5d020" font-family="Liberation Sans" font-weight="bold">64</text><circle cx="9" cy="5" r="2" fill="#fff" opacity=".8"/></svg>
<div class="a" style="left:545px;top:1197px;width:40px;height:3px;background:#76b9ed"></div>
<div class="a" style="left:590px;top:1197px;width:47px;height:3px;background:#76b9ed"></div>
<div class="a" style="left:740px;top:1197px;width:41px;height:3px;background:#76b9ed"></div>
<div class="a" style="left:838px;top:1197px;width:40px;height:3px;background:#76b9ed"></div>
<div class="t" id="cs" style="left:1645px;top:1172px;font-size:12px;color:#fff;letter-spacing:-1.5px">CS</div>
<svg class="a" style="left:1667px;top:1170px" width="16" height="15" viewBox="0 0 16 15"><rect x=".5" y="7.5" width="15" height="7" rx="1" fill="none" stroke="#ddd" stroke-width="1"/><path d="M3 10h10M3 12h10" stroke="#ddd" stroke-width="1" stroke-dasharray="1 1"/><path d="M4 7c1-3 5-1 7-3l3-3" fill="none" stroke="#ddd" stroke-width="1"/></svg>
<svg class="a" style="left:1711px;top:1175px" width="13" height="8" viewBox="0 0 13 8"><path d="M.5 7.5l6-6 6 6" fill="none" stroke="#fff" stroke-width="1.3"/></svg>
<svg class="a" style="left:1733px;top:1174px" width="17" height="11" viewBox="0 0 17 11"><path d="M3 11a3 3 0 0 1-.3-6A5 5 0 0 1 12 4a3.5 3.5 0 0 1 1.5 7z" fill="#e8e8e8"/></svg>
<svg class="a" style="left:1757px;top:1172px" width="17" height="16" viewBox="0 0 17 16"><rect x="4" y="3.5" width="12.5" height="9" fill="none" stroke="#fff" stroke-width="1"/><path d="M10 12.5v2.5M7 15.5h6" stroke="#fff" stroke-width="1"/><rect x=".5" y=".5" width="4" height="4" fill="#27343f" stroke="#fff" stroke-width="1"/><path d="M2.5 4.5v11" stroke="#fff" stroke-width="1"/></svg>
<svg class="a" style="left:1781px;top:1172px" width="17" height="14" viewBox="0 0 17 14"><path d="M.5 4.5h3l4-4v13l-4-4h-3z" fill="none" stroke="#fff" stroke-width="1"/><path d="M10 4.5a3 3 0 0 1 0 5M12 2.5a6 6 0 0 1 0 9M14 .7a8.5 8.5 0 0 1 0 12.6" fill="none" stroke="#fff" stroke-width="1"/></svg>
<div class="t" id="time" style="left:1820px;top:1165px;font-size:12px;color:#fff;letter-spacing:-0.9px">14:21</div>
<div class="t" id="date" style="left:1807px;top:1183px;font-size:12px;color:#fff;letter-spacing:-0.55px">25.06.2020</div>
<svg class="a" style="left:1879px;top:1171px" width="24" height="24" viewBox="0 0 24 24"><path d="M1 1h15v11h-8l-4 3v-3H1z" fill="#fff"/><path d="M3.5 4h10M3.5 6.5h10M3.5 9h7" stroke="#27343f" stroke-width="1"/><circle cx="15.5" cy="16.5" r="6.5" fill="#3a3a3a" stroke="#888" stroke-width="1"/><path d="M15.8 13v7M14 14.5l1.8-1.5" stroke="#fff" stroke-width="1.5"/></svg>

<!-- ANNOTATIONS -->
<div class="t" style="left:442px;top:195px;font-size:25px;color:#000;letter-spacing:.7px">Vlastní pohled</div>
<div class="t" style="left:1470px;top:499px;font-size:25px;color:#000;letter-spacing:.75px">Natočení do čelního pohledu</div>
<div class="t" style="left:1470px;top:534px;font-size:25px;color:#000;letter-spacing:.65px">k vybrané ploše</div>
<svg class="a" style="left:0;top:0" width="1920" height="1000" viewBox="0 0 1920 1000">
<path d="M415 215L203 380M203 380L233 343M203 380L261 357" fill="none" stroke="#000" stroke-width="5" stroke-linecap="round" stroke-linejoin="round"/>
<path d="M1487 557L878 928M878 928L911 898M878 928L921 913" fill="none" stroke="#ed1c24" stroke-width="5" stroke-linecap="round" stroke-linejoin="round"/>
</svg>

</body></html>
